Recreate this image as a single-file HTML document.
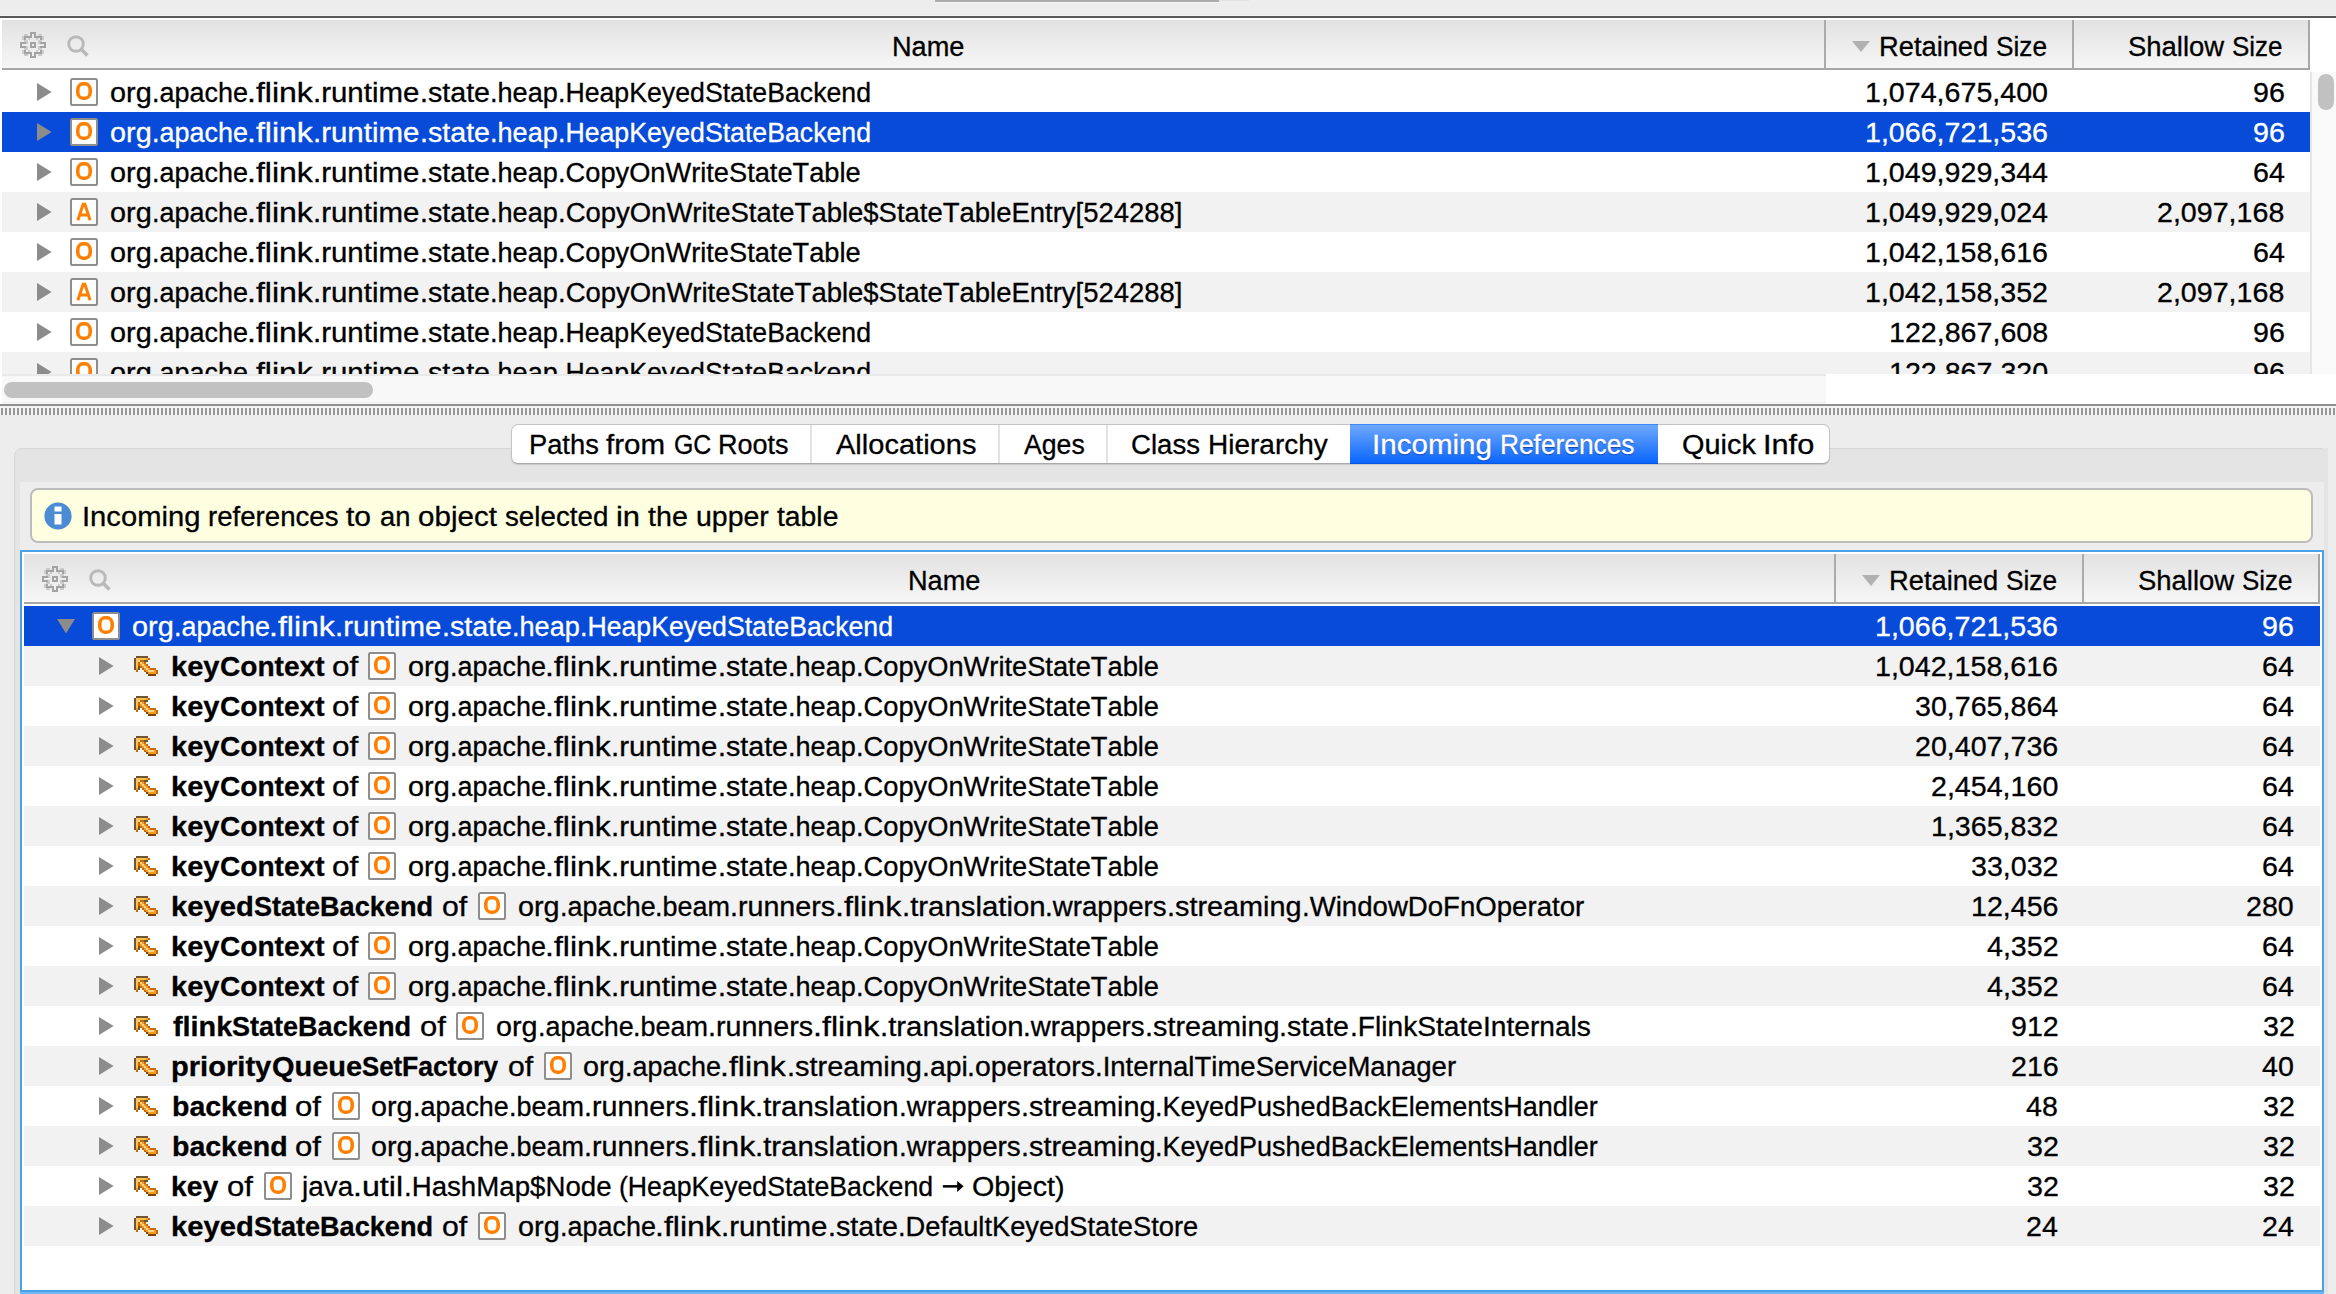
<!DOCTYPE html>
<html><head><meta charset="utf-8"><style>
html,body{margin:0;padding:0}
body{width:2336px;height:1294px;overflow:hidden;position:relative;background:#ededed;font-family:"Liberation Sans",sans-serif}
body div, body svg, body span{position:absolute;display:block}
span.t{white-space:pre;line-height:1.2;transform-origin:0 0;height:auto}
span.t{line-height:normal;font-kerning:none;font-variant-ligatures:none;-webkit-text-stroke:0.3px currentColor}
</style></head><body>
<div style="left:0px;top:0px;width:2336px;height:16px;background:#ededed"></div>
<div style="left:935px;top:0px;width:284px;height:2px;background:#ababab"></div>
<div style="left:1219px;top:0px;width:30px;height:1px;background:#e2e2e2"></div>
<div style="left:935px;top:2px;width:284px;height:1px;background:#f3f3f3"></div>
<div style="left:0px;top:15px;width:2336px;height:1px;background:#f4f4f4"></div>
<div style="left:0px;top:16px;width:2336px;height:2px;background:#595959"></div>
<div style="left:0px;top:18px;width:2336px;height:386px;background:#fff"></div>
<div style="left:2px;top:20px;width:2308px;height:48px;background:linear-gradient(#e2e2e2,#f6f6f6)"></div>
<div style="left:2px;top:68px;width:2308px;height:2px;background:#a7a7a7"></div>
<div style="left:1824px;top:20px;width:2px;height:48px;background:#ababab"></div>
<div style="left:2072px;top:20px;width:2px;height:48px;background:#ababab"></div>
<div style="left:2308px;top:20px;width:2px;height:50px;background:#a7a7a7"></div>
<svg style="left:20px;top:32px" width="26" height="26" viewBox="0 0 26 26" shape-rendering="crispEdges"><rect x="10" y="0" width="2" height="2" fill="#a3a3a3"/><rect x="12" y="0" width="2" height="2" fill="#a3a3a3"/><rect x="14" y="0" width="2" height="2" fill="#a3a3a3"/><rect x="4" y="2" width="2" height="2" fill="#cbcbcb"/><rect x="6" y="2" width="2" height="2" fill="#cbcbcb"/><rect x="10" y="2" width="2" height="2" fill="#a3a3a3"/><rect x="14" y="2" width="2" height="2" fill="#a3a3a3"/><rect x="18" y="2" width="2" height="2" fill="#cbcbcb"/><rect x="20" y="2" width="2" height="2" fill="#cbcbcb"/><rect x="2" y="4" width="2" height="2" fill="#cbcbcb"/><rect x="4" y="4" width="2" height="2" fill="#a3a3a3"/><rect x="6" y="4" width="2" height="2" fill="#a3a3a3"/><rect x="8" y="4" width="2" height="2" fill="#a3a3a3"/><rect x="10" y="4" width="2" height="2" fill="#a3a3a3"/><rect x="14" y="4" width="2" height="2" fill="#a3a3a3"/><rect x="16" y="4" width="2" height="2" fill="#a3a3a3"/><rect x="18" y="4" width="2" height="2" fill="#a3a3a3"/><rect x="20" y="4" width="2" height="2" fill="#a3a3a3"/><rect x="22" y="4" width="2" height="2" fill="#cbcbcb"/><rect x="2" y="6" width="2" height="2" fill="#cbcbcb"/><rect x="4" y="6" width="2" height="2" fill="#a3a3a3"/><rect x="8" y="6" width="2" height="2" fill="#cbcbcb"/><rect x="16" y="6" width="2" height="2" fill="#cbcbcb"/><rect x="20" y="6" width="2" height="2" fill="#a3a3a3"/><rect x="22" y="6" width="2" height="2" fill="#cbcbcb"/><rect x="4" y="8" width="2" height="2" fill="#cbcbcb"/><rect x="6" y="8" width="2" height="2" fill="#cbcbcb"/><rect x="18" y="8" width="2" height="2" fill="#cbcbcb"/><rect x="20" y="8" width="2" height="2" fill="#cbcbcb"/><rect x="0" y="10" width="2" height="2" fill="#a3a3a3"/><rect x="2" y="10" width="2" height="2" fill="#a3a3a3"/><rect x="4" y="10" width="2" height="2" fill="#a3a3a3"/><rect x="6" y="10" width="2" height="2" fill="#cbcbcb"/><rect x="10" y="10" width="2" height="2" fill="#a3a3a3"/><rect x="12" y="10" width="2" height="2" fill="#a3a3a3"/><rect x="14" y="10" width="2" height="2" fill="#a3a3a3"/><rect x="18" y="10" width="2" height="2" fill="#cbcbcb"/><rect x="20" y="10" width="2" height="2" fill="#a3a3a3"/><rect x="22" y="10" width="2" height="2" fill="#a3a3a3"/><rect x="24" y="10" width="2" height="2" fill="#a3a3a3"/><rect x="0" y="12" width="2" height="2" fill="#a3a3a3"/><rect x="10" y="12" width="2" height="2" fill="#a3a3a3"/><rect x="14" y="12" width="2" height="2" fill="#a3a3a3"/><rect x="24" y="12" width="2" height="2" fill="#a3a3a3"/><rect x="0" y="14" width="2" height="2" fill="#a3a3a3"/><rect x="2" y="14" width="2" height="2" fill="#a3a3a3"/><rect x="4" y="14" width="2" height="2" fill="#a3a3a3"/><rect x="6" y="14" width="2" height="2" fill="#cbcbcb"/><rect x="10" y="14" width="2" height="2" fill="#a3a3a3"/><rect x="12" y="14" width="2" height="2" fill="#a3a3a3"/><rect x="14" y="14" width="2" height="2" fill="#a3a3a3"/><rect x="18" y="14" width="2" height="2" fill="#cbcbcb"/><rect x="20" y="14" width="2" height="2" fill="#a3a3a3"/><rect x="22" y="14" width="2" height="2" fill="#a3a3a3"/><rect x="24" y="14" width="2" height="2" fill="#a3a3a3"/><rect x="4" y="16" width="2" height="2" fill="#cbcbcb"/><rect x="6" y="16" width="2" height="2" fill="#cbcbcb"/><rect x="18" y="16" width="2" height="2" fill="#cbcbcb"/><rect x="20" y="16" width="2" height="2" fill="#cbcbcb"/><rect x="2" y="18" width="2" height="2" fill="#cbcbcb"/><rect x="4" y="18" width="2" height="2" fill="#a3a3a3"/><rect x="8" y="18" width="2" height="2" fill="#cbcbcb"/><rect x="16" y="18" width="2" height="2" fill="#cbcbcb"/><rect x="20" y="18" width="2" height="2" fill="#a3a3a3"/><rect x="22" y="18" width="2" height="2" fill="#cbcbcb"/><rect x="2" y="20" width="2" height="2" fill="#cbcbcb"/><rect x="4" y="20" width="2" height="2" fill="#a3a3a3"/><rect x="6" y="20" width="2" height="2" fill="#a3a3a3"/><rect x="8" y="20" width="2" height="2" fill="#a3a3a3"/><rect x="10" y="20" width="2" height="2" fill="#a3a3a3"/><rect x="14" y="20" width="2" height="2" fill="#a3a3a3"/><rect x="16" y="20" width="2" height="2" fill="#a3a3a3"/><rect x="18" y="20" width="2" height="2" fill="#a3a3a3"/><rect x="20" y="20" width="2" height="2" fill="#a3a3a3"/><rect x="22" y="20" width="2" height="2" fill="#cbcbcb"/><rect x="4" y="22" width="2" height="2" fill="#cbcbcb"/><rect x="6" y="22" width="2" height="2" fill="#cbcbcb"/><rect x="10" y="22" width="2" height="2" fill="#a3a3a3"/><rect x="14" y="22" width="2" height="2" fill="#a3a3a3"/><rect x="18" y="22" width="2" height="2" fill="#cbcbcb"/><rect x="20" y="22" width="2" height="2" fill="#cbcbcb"/><rect x="10" y="24" width="2" height="2" fill="#a3a3a3"/><rect x="12" y="24" width="2" height="2" fill="#a3a3a3"/><rect x="14" y="24" width="2" height="2" fill="#a3a3a3"/></svg>
<svg style="left:64px;top:32px" width="26" height="26" viewBox="0 0 26 26"><circle cx="12" cy="12" r="7.3" fill="none" stroke="#b9b9b9" stroke-width="2.9"/><path d="M16.8 16.8l6.6 6.6" stroke="#b9b9b9" stroke-width="3.6" stroke-linecap="butt"/></svg>
<svg style="left:1852px;top:41px" width="18" height="11" viewBox="0 0 18 11"><path d="M0 0H18L9 11z" fill="#b1b1b1"/></svg>
<span class="t" style="left:891.77px;top:31.56px;font-size:27px;font-weight:normal;color:#000;transform:scaleX(1.0057);">Name</span>
<span class="t" style="left:1878.76px;top:31.56px;font-size:27px;font-weight:normal;color:#000;transform:scaleX(1.0105);">Retained </span>
<span class="t" style="left:1995.61px;top:31.56px;font-size:27px;font-weight:normal;color:#000;transform:scaleX(0.9721);">Size</span>
<span class="t" style="left:2127.75px;top:31.56px;font-size:27px;font-weight:normal;color:#000;transform:scaleX(1.0171);">Shallow </span>
<span class="t" style="left:2231.62px;top:31.56px;font-size:27px;font-weight:normal;color:#000;transform:scaleX(0.9621);">Size</span>
<div style="left:0;top:0;width:2336px;height:1294px;clip-path:inset(70px 26px 920px 0px)">
<div style="left:2px;top:72px;width:2308px;height:40px;background:#fff"></div>
<svg style="left:37px;top:83px" width="15" height="18" viewBox="0 0 15 18"><path d="M0 0L14.6 9L0 18z" fill="#8c8c8c"/></svg>
<svg style="left:70px;top:78px" width="28" height="28" viewBox="0 0 28 28"><rect x="1" y="1" width="26" height="26" rx="1.6" fill="#fff" stroke="#8e8e8e" stroke-width="2"/><rect x="7.8" y="5.8" width="12.4" height="14.4" rx="5.2" ry="6" fill="none" stroke="#ff8000" stroke-width="3.6"/></svg>
<span class="t" style="left:109.89px;top:77.56px;font-size:27px;font-weight:normal;color:#000;transform:scaleX(1.0680);">org</span>
<span class="t" style="left:151.74px;top:77.56px;font-size:27px;font-weight:normal;color:#000;transform:scaleX(0.9981);">.apache</span>
<span class="t" style="left:247.17px;top:77.56px;font-size:27px;font-weight:normal;color:#000;transform:scaleX(1.1870);">.flink</span>
<span class="t" style="left:313.31px;top:77.56px;font-size:27px;font-weight:normal;color:#000;transform:scaleX(1.0899);">.runtime</span>
<span class="t" style="left:419.69px;top:77.56px;font-size:27px;font-weight:normal;color:#000;transform:scaleX(1.0600);">.state</span>
<span class="t" style="left:489.83px;top:77.56px;font-size:27px;font-weight:normal;color:#000;transform:scaleX(1.0035);">.heap</span>
<span class="t" style="left:557.66px;top:77.56px;font-size:27px;font-weight:normal;color:#000;transform:scaleX(0.9884);">.HeapKeyedStateBackend</span>
<span class="t" style="left:1865.09px;top:77.56px;font-size:27px;font-weight:normal;color:#000;transform:scaleX(1.0600);">1,074,675,400</span>
<span class="t" style="left:2252.92px;top:77.56px;font-size:27px;font-weight:normal;color:#000;transform:scaleX(1.0600);">96</span>
<div style="left:2px;top:112px;width:2308px;height:40px;background:#074bd8"></div>
<svg style="left:37px;top:123px" width="15" height="18" viewBox="0 0 15 18"><path d="M0 0L14.6 9L0 18z" fill="#8c8c8c"/></svg>
<svg style="left:70px;top:118px" width="28" height="28" viewBox="0 0 28 28"><rect x="1" y="1" width="26" height="26" rx="1.6" fill="#fff" stroke="#8e8e8e" stroke-width="2"/><rect x="7.8" y="5.8" width="12.4" height="14.4" rx="5.2" ry="6" fill="none" stroke="#ff8000" stroke-width="3.6"/></svg>
<span class="t" style="left:109.89px;top:117.56px;font-size:27px;font-weight:normal;color:#fff;transform:scaleX(1.0680);">org</span>
<span class="t" style="left:151.74px;top:117.56px;font-size:27px;font-weight:normal;color:#fff;transform:scaleX(0.9981);">.apache</span>
<span class="t" style="left:247.17px;top:117.56px;font-size:27px;font-weight:normal;color:#fff;transform:scaleX(1.1870);">.flink</span>
<span class="t" style="left:313.31px;top:117.56px;font-size:27px;font-weight:normal;color:#fff;transform:scaleX(1.0899);">.runtime</span>
<span class="t" style="left:419.69px;top:117.56px;font-size:27px;font-weight:normal;color:#fff;transform:scaleX(1.0600);">.state</span>
<span class="t" style="left:489.83px;top:117.56px;font-size:27px;font-weight:normal;color:#fff;transform:scaleX(1.0035);">.heap</span>
<span class="t" style="left:557.66px;top:117.56px;font-size:27px;font-weight:normal;color:#fff;transform:scaleX(0.9884);">.HeapKeyedStateBackend</span>
<span class="t" style="left:1865.23px;top:117.56px;font-size:27px;font-weight:normal;color:#fff;transform:scaleX(1.0600);">1,066,721,536</span>
<span class="t" style="left:2252.92px;top:117.56px;font-size:27px;font-weight:normal;color:#fff;transform:scaleX(1.0600);">96</span>
<div style="left:2px;top:152px;width:2308px;height:40px;background:#fff"></div>
<svg style="left:37px;top:163px" width="15" height="18" viewBox="0 0 15 18"><path d="M0 0L14.6 9L0 18z" fill="#8c8c8c"/></svg>
<svg style="left:70px;top:158px" width="28" height="28" viewBox="0 0 28 28"><rect x="1" y="1" width="26" height="26" rx="1.6" fill="#fff" stroke="#8e8e8e" stroke-width="2"/><rect x="7.8" y="5.8" width="12.4" height="14.4" rx="5.2" ry="6" fill="none" stroke="#ff8000" stroke-width="3.6"/></svg>
<span class="t" style="left:109.89px;top:157.56px;font-size:27px;font-weight:normal;color:#000;transform:scaleX(1.0680);">org</span>
<span class="t" style="left:151.74px;top:157.56px;font-size:27px;font-weight:normal;color:#000;transform:scaleX(0.9981);">.apache</span>
<span class="t" style="left:247.17px;top:157.56px;font-size:27px;font-weight:normal;color:#000;transform:scaleX(1.1870);">.flink</span>
<span class="t" style="left:313.31px;top:157.56px;font-size:27px;font-weight:normal;color:#000;transform:scaleX(1.0899);">.runtime</span>
<span class="t" style="left:419.69px;top:157.56px;font-size:27px;font-weight:normal;color:#000;transform:scaleX(1.0600);">.state</span>
<span class="t" style="left:489.83px;top:157.56px;font-size:27px;font-weight:normal;color:#000;transform:scaleX(1.0035);">.heap</span>
<span class="t" style="left:557.61px;top:157.56px;font-size:27px;font-weight:normal;color:#000;transform:scaleX(1.0086);">.CopyOnWriteStateTable</span>
<span class="t" style="left:1864.81px;top:157.56px;font-size:27px;font-weight:normal;color:#000;transform:scaleX(1.0600);">1,049,929,344</span>
<span class="t" style="left:2252.50px;top:157.56px;font-size:27px;font-weight:normal;color:#000;transform:scaleX(1.0600);">64</span>
<div style="left:2px;top:192px;width:2308px;height:40px;background:#f2f2f2"></div>
<svg style="left:37px;top:203px" width="15" height="18" viewBox="0 0 15 18"><path d="M0 0L14.6 9L0 18z" fill="#8c8c8c"/></svg>
<svg style="left:70px;top:198px" width="28" height="28" viewBox="0 0 28 28"><rect x="1" y="1" width="26" height="26" rx="1.6" fill="#fff" stroke="#8e8e8e" stroke-width="2"/><path d="M7.9 22.2 L13.1 6.3 h1.8 L20.1 22.2 M10.4 17 h7.2" fill="none" stroke="#ff7f00" stroke-width="3"/></svg>
<span class="t" style="left:109.89px;top:197.56px;font-size:27px;font-weight:normal;color:#000;transform:scaleX(1.0680);">org</span>
<span class="t" style="left:151.74px;top:197.56px;font-size:27px;font-weight:normal;color:#000;transform:scaleX(0.9981);">.apache</span>
<span class="t" style="left:247.17px;top:197.56px;font-size:27px;font-weight:normal;color:#000;transform:scaleX(1.1870);">.flink</span>
<span class="t" style="left:313.31px;top:197.56px;font-size:27px;font-weight:normal;color:#000;transform:scaleX(1.0899);">.runtime</span>
<span class="t" style="left:419.69px;top:197.56px;font-size:27px;font-weight:normal;color:#000;transform:scaleX(1.0600);">.state</span>
<span class="t" style="left:489.83px;top:197.56px;font-size:27px;font-weight:normal;color:#000;transform:scaleX(1.0035);">.heap</span>
<span class="t" style="left:557.59px;top:197.56px;font-size:27px;font-weight:normal;color:#000;transform:scaleX(1.0173);">.CopyOnWriteStateTable$StateTableEntry[524288]</span>
<span class="t" style="left:1864.81px;top:197.56px;font-size:27px;font-weight:normal;color:#000;transform:scaleX(1.0600);">1,049,929,024</span>
<span class="t" style="left:2157.42px;top:197.56px;font-size:27px;font-weight:normal;color:#000;transform:scaleX(1.0600);">2,097,168</span>
<div style="left:2px;top:232px;width:2308px;height:40px;background:#fff"></div>
<svg style="left:37px;top:243px" width="15" height="18" viewBox="0 0 15 18"><path d="M0 0L14.6 9L0 18z" fill="#8c8c8c"/></svg>
<svg style="left:70px;top:238px" width="28" height="28" viewBox="0 0 28 28"><rect x="1" y="1" width="26" height="26" rx="1.6" fill="#fff" stroke="#8e8e8e" stroke-width="2"/><rect x="7.8" y="5.8" width="12.4" height="14.4" rx="5.2" ry="6" fill="none" stroke="#ff8000" stroke-width="3.6"/></svg>
<span class="t" style="left:109.89px;top:237.56px;font-size:27px;font-weight:normal;color:#000;transform:scaleX(1.0680);">org</span>
<span class="t" style="left:151.74px;top:237.56px;font-size:27px;font-weight:normal;color:#000;transform:scaleX(0.9981);">.apache</span>
<span class="t" style="left:247.17px;top:237.56px;font-size:27px;font-weight:normal;color:#000;transform:scaleX(1.1870);">.flink</span>
<span class="t" style="left:313.31px;top:237.56px;font-size:27px;font-weight:normal;color:#000;transform:scaleX(1.0899);">.runtime</span>
<span class="t" style="left:419.69px;top:237.56px;font-size:27px;font-weight:normal;color:#000;transform:scaleX(1.0600);">.state</span>
<span class="t" style="left:489.83px;top:237.56px;font-size:27px;font-weight:normal;color:#000;transform:scaleX(1.0035);">.heap</span>
<span class="t" style="left:557.61px;top:237.56px;font-size:27px;font-weight:normal;color:#000;transform:scaleX(1.0086);">.CopyOnWriteStateTable</span>
<span class="t" style="left:1865.23px;top:237.56px;font-size:27px;font-weight:normal;color:#000;transform:scaleX(1.0600);">1,042,158,616</span>
<span class="t" style="left:2252.50px;top:237.56px;font-size:27px;font-weight:normal;color:#000;transform:scaleX(1.0600);">64</span>
<div style="left:2px;top:272px;width:2308px;height:40px;background:#f2f2f2"></div>
<svg style="left:37px;top:283px" width="15" height="18" viewBox="0 0 15 18"><path d="M0 0L14.6 9L0 18z" fill="#8c8c8c"/></svg>
<svg style="left:70px;top:278px" width="28" height="28" viewBox="0 0 28 28"><rect x="1" y="1" width="26" height="26" rx="1.6" fill="#fff" stroke="#8e8e8e" stroke-width="2"/><path d="M7.9 22.2 L13.1 6.3 h1.8 L20.1 22.2 M10.4 17 h7.2" fill="none" stroke="#ff7f00" stroke-width="3"/></svg>
<span class="t" style="left:109.89px;top:277.56px;font-size:27px;font-weight:normal;color:#000;transform:scaleX(1.0680);">org</span>
<span class="t" style="left:151.74px;top:277.56px;font-size:27px;font-weight:normal;color:#000;transform:scaleX(0.9981);">.apache</span>
<span class="t" style="left:247.17px;top:277.56px;font-size:27px;font-weight:normal;color:#000;transform:scaleX(1.1870);">.flink</span>
<span class="t" style="left:313.31px;top:277.56px;font-size:27px;font-weight:normal;color:#000;transform:scaleX(1.0899);">.runtime</span>
<span class="t" style="left:419.69px;top:277.56px;font-size:27px;font-weight:normal;color:#000;transform:scaleX(1.0600);">.state</span>
<span class="t" style="left:489.83px;top:277.56px;font-size:27px;font-weight:normal;color:#000;transform:scaleX(1.0035);">.heap</span>
<span class="t" style="left:557.59px;top:277.56px;font-size:27px;font-weight:normal;color:#000;transform:scaleX(1.0173);">.CopyOnWriteStateTable$StateTableEntry[524288]</span>
<span class="t" style="left:1865.41px;top:277.56px;font-size:27px;font-weight:normal;color:#000;transform:scaleX(1.0600);">1,042,158,352</span>
<span class="t" style="left:2157.42px;top:277.56px;font-size:27px;font-weight:normal;color:#000;transform:scaleX(1.0600);">2,097,168</span>
<div style="left:2px;top:312px;width:2308px;height:40px;background:#fff"></div>
<svg style="left:37px;top:323px" width="15" height="18" viewBox="0 0 15 18"><path d="M0 0L14.6 9L0 18z" fill="#8c8c8c"/></svg>
<svg style="left:70px;top:318px" width="28" height="28" viewBox="0 0 28 28"><rect x="1" y="1" width="26" height="26" rx="1.6" fill="#fff" stroke="#8e8e8e" stroke-width="2"/><rect x="7.8" y="5.8" width="12.4" height="14.4" rx="5.2" ry="6" fill="none" stroke="#ff8000" stroke-width="3.6"/></svg>
<span class="t" style="left:109.89px;top:317.56px;font-size:27px;font-weight:normal;color:#000;transform:scaleX(1.0680);">org</span>
<span class="t" style="left:151.74px;top:317.56px;font-size:27px;font-weight:normal;color:#000;transform:scaleX(0.9981);">.apache</span>
<span class="t" style="left:247.17px;top:317.56px;font-size:27px;font-weight:normal;color:#000;transform:scaleX(1.1870);">.flink</span>
<span class="t" style="left:313.31px;top:317.56px;font-size:27px;font-weight:normal;color:#000;transform:scaleX(1.0899);">.runtime</span>
<span class="t" style="left:419.69px;top:317.56px;font-size:27px;font-weight:normal;color:#000;transform:scaleX(1.0600);">.state</span>
<span class="t" style="left:489.83px;top:317.56px;font-size:27px;font-weight:normal;color:#000;transform:scaleX(1.0035);">.heap</span>
<span class="t" style="left:557.66px;top:317.56px;font-size:27px;font-weight:normal;color:#000;transform:scaleX(0.9884);">.HeapKeyedStateBackend</span>
<span class="t" style="left:1889.09px;top:317.56px;font-size:27px;font-weight:normal;color:#000;transform:scaleX(1.0600);">122,867,608</span>
<span class="t" style="left:2252.92px;top:317.56px;font-size:27px;font-weight:normal;color:#000;transform:scaleX(1.0600);">96</span>
<div style="left:2px;top:352px;width:2308px;height:40px;background:#f2f2f2"></div>
<svg style="left:37px;top:363px" width="15" height="18" viewBox="0 0 15 18"><path d="M0 0L14.6 9L0 18z" fill="#8c8c8c"/></svg>
<svg style="left:70px;top:358px" width="28" height="28" viewBox="0 0 28 28"><rect x="1" y="1" width="26" height="26" rx="1.6" fill="#fff" stroke="#8e8e8e" stroke-width="2"/><rect x="7.8" y="5.8" width="12.4" height="14.4" rx="5.2" ry="6" fill="none" stroke="#ff8000" stroke-width="3.6"/></svg>
<span class="t" style="left:109.89px;top:357.56px;font-size:27px;font-weight:normal;color:#000;transform:scaleX(1.0680);">org</span>
<span class="t" style="left:151.74px;top:357.56px;font-size:27px;font-weight:normal;color:#000;transform:scaleX(0.9981);">.apache</span>
<span class="t" style="left:247.17px;top:357.56px;font-size:27px;font-weight:normal;color:#000;transform:scaleX(1.1870);">.flink</span>
<span class="t" style="left:313.31px;top:357.56px;font-size:27px;font-weight:normal;color:#000;transform:scaleX(1.0899);">.runtime</span>
<span class="t" style="left:419.69px;top:357.56px;font-size:27px;font-weight:normal;color:#000;transform:scaleX(1.0600);">.state</span>
<span class="t" style="left:489.83px;top:357.56px;font-size:27px;font-weight:normal;color:#000;transform:scaleX(1.0035);">.heap</span>
<span class="t" style="left:557.66px;top:357.56px;font-size:27px;font-weight:normal;color:#000;transform:scaleX(0.9884);">.HeapKeyedStateBackend</span>
<span class="t" style="left:1888.96px;top:357.56px;font-size:27px;font-weight:normal;color:#000;transform:scaleX(1.0600);">122,867,320</span>
<span class="t" style="left:2252.92px;top:357.56px;font-size:27px;font-weight:normal;color:#000;transform:scaleX(1.0600);">96</span>
</div>
<div style="left:2310px;top:72px;width:26px;height:302px;background:#f9f9f9"></div>
<div style="left:2310px;top:72px;width:2px;height:302px;background:#e6e6e6"></div>
<div style="left:2318px;top:74px;width:16px;height:36px;background:#c1c1c1;border-radius:8px"></div>
<div style="left:2px;top:374px;width:1824px;height:2px;background:#e9e9e9"></div>
<div style="left:2px;top:376px;width:1824px;height:28px;background:#f8f8f8"></div>
<div style="left:4px;top:382px;width:369px;height:16px;background:#c1c1c1;border-radius:8px"></div>
<div style="left:2px;top:402px;width:1824px;height:1px;background:#ececec"></div>
<div style="left:0px;top:404px;width:2336px;height:2px;background:#8f8f8f"></div>
<div style="left:0px;top:406px;width:2336px;height:2px;background:#f2f2f2"></div>
<div style="left:0px;top:408px;width:2336px;height:7px;background:repeating-linear-gradient(90deg,#f4f4f4 0 1px,#979797 1px 3px,#f4f4f4 3px 4px)"></div>
<div style="left:0px;top:415px;width:2336px;height:879px;background:#ededed"></div>
<div style="left:14px;top:448px;width:2314px;height:860px;background:#e4e4e4;border:1px solid #d6d6d6;border-radius:8px;box-sizing:border-box"></div>
<div style="left:20px;top:482px;width:2304px;height:812px;background:#ededed"></div>
<div style="left:511px;top:424px;width:1319px;height:40px;background:#fff;border:1px solid #c3c3c3;border-bottom-color:#a9a9a9;border-radius:7px;box-sizing:border-box;box-shadow:0 1px 1px rgba(0,0,0,0.12)"></div>
<div style="left:1350px;top:424px;width:308px;height:40px;background:linear-gradient(#6ea8fb,#0a66fe);border-top:1px solid #3d88fa;border-bottom:1px solid #0658e0;box-sizing:border-box"></div>
<div style="left:810px;top:425px;width:2px;height:38px;background:#e3e3e3"></div>
<div style="left:998px;top:425px;width:2px;height:38px;background:#e3e3e3"></div>
<div style="left:1106px;top:425px;width:2px;height:38px;background:#e3e3e3"></div>
<span class="t" style="left:529.06px;top:429.56px;font-size:27px;font-weight:normal;color:#000;transform:scaleX(1.0106);">Paths </span>
<span class="t" style="left:606.38px;top:429.56px;font-size:27px;font-weight:normal;color:#000;transform:scaleX(1.0932);">from </span>
<span class="t" style="left:673.85px;top:429.56px;font-size:27px;font-weight:normal;color:#000;transform:scaleX(0.9210);">GC </span>
<span class="t" style="left:717.88px;top:429.56px;font-size:27px;font-weight:normal;color:#000;transform:scaleX(1.0009);">Roots</span>
<span class="t" style="left:836.34px;top:429.56px;font-size:27px;font-weight:normal;color:#000;transform:scaleX(1.0753);">Allocations</span>
<span class="t" style="left:1023.95px;top:429.56px;font-size:27px;font-weight:normal;color:#000;transform:scaleX(0.9866);">Ages</span>
<span class="t" style="left:1131.30px;top:429.56px;font-size:27px;font-weight:normal;color:#000;transform:scaleX(1.0216);">Class </span>
<span class="t" style="left:1207.90px;top:429.56px;font-size:27px;font-weight:normal;color:#000;transform:scaleX(1.0366);">Hierarchy</span>
<span class="t" style="left:1371.57px;top:429.56px;font-size:27px;font-weight:normal;color:#fff;transform:scaleX(1.0952);text-shadow:0 1px 1px rgba(0,20,90,0.55);">Incoming </span>
<span class="t" style="left:1500.04px;top:429.56px;font-size:27px;font-weight:normal;color:#fff;transform:scaleX(0.9742);text-shadow:0 1px 1px rgba(0,20,90,0.55);">References</span>
<span class="t" style="left:1681.53px;top:429.56px;font-size:27px;font-weight:normal;color:#000;transform:scaleX(1.0704);">Quick </span>
<span class="t" style="left:1763.27px;top:429.56px;font-size:27px;font-weight:normal;color:#000;transform:scaleX(1.1374);">Info</span>
<div style="left:30px;top:488px;width:2283px;height:55px;background:#fefee1;border:2px solid #bcbcbc;border-radius:8px;box-sizing:border-box"></div>
<svg style="left:44px;top:502px" width="28" height="28" viewBox="0 0 28 28"><circle cx="14" cy="14" r="13.6" fill="#4a8bd3"/><rect x="10.5" y="4.5" width="7" height="5" fill="#fff"/><rect x="10.5" y="12" width="7" height="10.5" fill="#fff"/></svg>
<span class="t" style="left:81.61px;top:501.56px;font-size:27px;font-weight:normal;color:#000;transform:scaleX(1.0803);">Incoming </span>
<span class="t" style="left:208.17px;top:501.56px;font-size:27px;font-weight:normal;color:#000;transform:scaleX(1.0233);">references </span>
<span class="t" style="left:346.35px;top:501.56px;font-size:27px;font-weight:normal;color:#000;transform:scaleX(1.1119);">to </span>
<span class="t" style="left:379.84px;top:501.56px;font-size:27px;font-weight:normal;color:#000;transform:scaleX(1.0128);">an </span>
<span class="t" style="left:417.76px;top:501.56px;font-size:27px;font-weight:normal;color:#000;transform:scaleX(1.0951);">object </span>
<span class="t" style="left:504.93px;top:501.56px;font-size:27px;font-weight:normal;color:#000;transform:scaleX(1.0273);">selected </span>
<span class="t" style="left:615.74px;top:501.56px;font-size:27px;font-weight:normal;color:#000;transform:scaleX(1.1431);">in </span>
<span class="t" style="left:648.37px;top:501.56px;font-size:27px;font-weight:normal;color:#000;transform:scaleX(1.0608);">the </span>
<span class="t" style="left:696.15px;top:501.56px;font-size:27px;font-weight:normal;color:#000;transform:scaleX(1.0543);">upper </span>
<span class="t" style="left:776.87px;top:501.56px;font-size:27px;font-weight:normal;color:#000;transform:scaleX(1.0485);">table</span>
<div style="left:20px;top:550px;width:2304px;height:742px;border:2px solid #4ca0e4;box-sizing:border-box;background:#fff"></div>
<div style="left:20px;top:1292px;width:2304px;height:2px;background:#6cbafa"></div>
<div style="left:24px;top:554px;width:2296px;height:48px;background:linear-gradient(#e2e2e2,#f6f6f6)"></div>
<div style="left:24px;top:602px;width:2296px;height:2px;background:#a7a7a7"></div>
<div style="left:1834px;top:554px;width:2px;height:48px;background:#ababab"></div>
<div style="left:2082px;top:554px;width:2px;height:48px;background:#ababab"></div>
<div style="left:2318px;top:554px;width:2px;height:50px;background:#a7a7a7"></div>
<svg style="left:42px;top:566px" width="26" height="26" viewBox="0 0 26 26" shape-rendering="crispEdges"><rect x="10" y="0" width="2" height="2" fill="#a3a3a3"/><rect x="12" y="0" width="2" height="2" fill="#a3a3a3"/><rect x="14" y="0" width="2" height="2" fill="#a3a3a3"/><rect x="4" y="2" width="2" height="2" fill="#cbcbcb"/><rect x="6" y="2" width="2" height="2" fill="#cbcbcb"/><rect x="10" y="2" width="2" height="2" fill="#a3a3a3"/><rect x="14" y="2" width="2" height="2" fill="#a3a3a3"/><rect x="18" y="2" width="2" height="2" fill="#cbcbcb"/><rect x="20" y="2" width="2" height="2" fill="#cbcbcb"/><rect x="2" y="4" width="2" height="2" fill="#cbcbcb"/><rect x="4" y="4" width="2" height="2" fill="#a3a3a3"/><rect x="6" y="4" width="2" height="2" fill="#a3a3a3"/><rect x="8" y="4" width="2" height="2" fill="#a3a3a3"/><rect x="10" y="4" width="2" height="2" fill="#a3a3a3"/><rect x="14" y="4" width="2" height="2" fill="#a3a3a3"/><rect x="16" y="4" width="2" height="2" fill="#a3a3a3"/><rect x="18" y="4" width="2" height="2" fill="#a3a3a3"/><rect x="20" y="4" width="2" height="2" fill="#a3a3a3"/><rect x="22" y="4" width="2" height="2" fill="#cbcbcb"/><rect x="2" y="6" width="2" height="2" fill="#cbcbcb"/><rect x="4" y="6" width="2" height="2" fill="#a3a3a3"/><rect x="8" y="6" width="2" height="2" fill="#cbcbcb"/><rect x="16" y="6" width="2" height="2" fill="#cbcbcb"/><rect x="20" y="6" width="2" height="2" fill="#a3a3a3"/><rect x="22" y="6" width="2" height="2" fill="#cbcbcb"/><rect x="4" y="8" width="2" height="2" fill="#cbcbcb"/><rect x="6" y="8" width="2" height="2" fill="#cbcbcb"/><rect x="18" y="8" width="2" height="2" fill="#cbcbcb"/><rect x="20" y="8" width="2" height="2" fill="#cbcbcb"/><rect x="0" y="10" width="2" height="2" fill="#a3a3a3"/><rect x="2" y="10" width="2" height="2" fill="#a3a3a3"/><rect x="4" y="10" width="2" height="2" fill="#a3a3a3"/><rect x="6" y="10" width="2" height="2" fill="#cbcbcb"/><rect x="10" y="10" width="2" height="2" fill="#a3a3a3"/><rect x="12" y="10" width="2" height="2" fill="#a3a3a3"/><rect x="14" y="10" width="2" height="2" fill="#a3a3a3"/><rect x="18" y="10" width="2" height="2" fill="#cbcbcb"/><rect x="20" y="10" width="2" height="2" fill="#a3a3a3"/><rect x="22" y="10" width="2" height="2" fill="#a3a3a3"/><rect x="24" y="10" width="2" height="2" fill="#a3a3a3"/><rect x="0" y="12" width="2" height="2" fill="#a3a3a3"/><rect x="10" y="12" width="2" height="2" fill="#a3a3a3"/><rect x="14" y="12" width="2" height="2" fill="#a3a3a3"/><rect x="24" y="12" width="2" height="2" fill="#a3a3a3"/><rect x="0" y="14" width="2" height="2" fill="#a3a3a3"/><rect x="2" y="14" width="2" height="2" fill="#a3a3a3"/><rect x="4" y="14" width="2" height="2" fill="#a3a3a3"/><rect x="6" y="14" width="2" height="2" fill="#cbcbcb"/><rect x="10" y="14" width="2" height="2" fill="#a3a3a3"/><rect x="12" y="14" width="2" height="2" fill="#a3a3a3"/><rect x="14" y="14" width="2" height="2" fill="#a3a3a3"/><rect x="18" y="14" width="2" height="2" fill="#cbcbcb"/><rect x="20" y="14" width="2" height="2" fill="#a3a3a3"/><rect x="22" y="14" width="2" height="2" fill="#a3a3a3"/><rect x="24" y="14" width="2" height="2" fill="#a3a3a3"/><rect x="4" y="16" width="2" height="2" fill="#cbcbcb"/><rect x="6" y="16" width="2" height="2" fill="#cbcbcb"/><rect x="18" y="16" width="2" height="2" fill="#cbcbcb"/><rect x="20" y="16" width="2" height="2" fill="#cbcbcb"/><rect x="2" y="18" width="2" height="2" fill="#cbcbcb"/><rect x="4" y="18" width="2" height="2" fill="#a3a3a3"/><rect x="8" y="18" width="2" height="2" fill="#cbcbcb"/><rect x="16" y="18" width="2" height="2" fill="#cbcbcb"/><rect x="20" y="18" width="2" height="2" fill="#a3a3a3"/><rect x="22" y="18" width="2" height="2" fill="#cbcbcb"/><rect x="2" y="20" width="2" height="2" fill="#cbcbcb"/><rect x="4" y="20" width="2" height="2" fill="#a3a3a3"/><rect x="6" y="20" width="2" height="2" fill="#a3a3a3"/><rect x="8" y="20" width="2" height="2" fill="#a3a3a3"/><rect x="10" y="20" width="2" height="2" fill="#a3a3a3"/><rect x="14" y="20" width="2" height="2" fill="#a3a3a3"/><rect x="16" y="20" width="2" height="2" fill="#a3a3a3"/><rect x="18" y="20" width="2" height="2" fill="#a3a3a3"/><rect x="20" y="20" width="2" height="2" fill="#a3a3a3"/><rect x="22" y="20" width="2" height="2" fill="#cbcbcb"/><rect x="4" y="22" width="2" height="2" fill="#cbcbcb"/><rect x="6" y="22" width="2" height="2" fill="#cbcbcb"/><rect x="10" y="22" width="2" height="2" fill="#a3a3a3"/><rect x="14" y="22" width="2" height="2" fill="#a3a3a3"/><rect x="18" y="22" width="2" height="2" fill="#cbcbcb"/><rect x="20" y="22" width="2" height="2" fill="#cbcbcb"/><rect x="10" y="24" width="2" height="2" fill="#a3a3a3"/><rect x="12" y="24" width="2" height="2" fill="#a3a3a3"/><rect x="14" y="24" width="2" height="2" fill="#a3a3a3"/></svg>
<svg style="left:86px;top:566px" width="26" height="26" viewBox="0 0 26 26"><circle cx="12" cy="12" r="7.3" fill="none" stroke="#b9b9b9" stroke-width="2.9"/><path d="M16.8 16.8l6.6 6.6" stroke="#b9b9b9" stroke-width="3.6" stroke-linecap="butt"/></svg>
<svg style="left:1862px;top:575px" width="18" height="11" viewBox="0 0 18 11"><path d="M0 0H18L9 11z" fill="#b1b1b1"/></svg>
<span class="t" style="left:907.77px;top:565.57px;font-size:27px;font-weight:normal;color:#000;transform:scaleX(1.0057);">Name</span>
<span class="t" style="left:1888.76px;top:565.57px;font-size:27px;font-weight:normal;color:#000;transform:scaleX(1.0105);">Retained </span>
<span class="t" style="left:2005.61px;top:565.57px;font-size:27px;font-weight:normal;color:#000;transform:scaleX(0.9721);">Size</span>
<span class="t" style="left:2137.75px;top:565.57px;font-size:27px;font-weight:normal;color:#000;transform:scaleX(1.0171);">Shallow </span>
<span class="t" style="left:2241.62px;top:565.57px;font-size:27px;font-weight:normal;color:#000;transform:scaleX(0.9621);">Size</span>
<div style="left:24px;top:606px;width:2296px;height:40px;background:#074bd8"></div>
<svg style="left:57px;top:619px" width="18" height="15" viewBox="0 0 18 15"><path d="M0 0H18L9 14.5z" fill="#8c8c8c"/></svg>
<svg style="left:92px;top:612px" width="28" height="28" viewBox="0 0 28 28"><rect x="1" y="1" width="26" height="26" rx="1.6" fill="#fff" stroke="#8e8e8e" stroke-width="2"/><rect x="7.8" y="5.8" width="12.4" height="14.4" rx="5.2" ry="6" fill="none" stroke="#ff8000" stroke-width="3.6"/></svg>
<span class="t" style="left:131.79px;top:611.57px;font-size:27px;font-weight:normal;color:#fff;transform:scaleX(1.0680);">org</span>
<span class="t" style="left:173.64px;top:611.57px;font-size:27px;font-weight:normal;color:#fff;transform:scaleX(0.9981);">.apache</span>
<span class="t" style="left:269.07px;top:611.57px;font-size:27px;font-weight:normal;color:#fff;transform:scaleX(1.1870);">.flink</span>
<span class="t" style="left:335.21px;top:611.57px;font-size:27px;font-weight:normal;color:#fff;transform:scaleX(1.0899);">.runtime</span>
<span class="t" style="left:441.59px;top:611.57px;font-size:27px;font-weight:normal;color:#fff;transform:scaleX(1.0600);">.state</span>
<span class="t" style="left:511.73px;top:611.57px;font-size:27px;font-weight:normal;color:#fff;transform:scaleX(1.0035);">.heap</span>
<span class="t" style="left:579.56px;top:611.57px;font-size:27px;font-weight:normal;color:#fff;transform:scaleX(0.9884);">.HeapKeyedStateBackend</span>
<span class="t" style="left:1875.23px;top:611.57px;font-size:27px;font-weight:normal;color:#fff;transform:scaleX(1.0600);">1,066,721,536</span>
<span class="t" style="left:2262.42px;top:611.57px;font-size:27px;font-weight:normal;color:#fff;transform:scaleX(1.0600);">96</span>
<div style="left:24px;top:646px;width:2296px;height:40px;background:#f2f2f2"></div>
<svg style="left:99px;top:657px" width="15" height="18" viewBox="0 0 15 18"><path d="M0 0L14.6 9L0 18z" fill="#8c8c8c"/></svg>
<svg style="left:134px;top:656px" width="24" height="20" viewBox="0 0 24 20" shape-rendering="crispEdges"><rect x="2" y="0" width="2" height="2" fill="#6e5634"/><rect x="4" y="0" width="2" height="2" fill="#6e5634"/><rect x="6" y="0" width="2" height="2" fill="#6e5634"/><rect x="8" y="0" width="2" height="2" fill="#6e5634"/><rect x="10" y="0" width="2" height="2" fill="#6e5634"/><rect x="12" y="0" width="2" height="2" fill="#6e5634"/><rect x="0" y="2" width="2" height="2" fill="#6e5634"/><rect x="2" y="2" width="2" height="2" fill="#ffc04f"/><rect x="4" y="2" width="2" height="2" fill="#ffc04f"/><rect x="6" y="2" width="2" height="2" fill="#ffc04f"/><rect x="8" y="2" width="2" height="2" fill="#ffc04f"/><rect x="10" y="2" width="2" height="2" fill="#ffc04f"/><rect x="12" y="2" width="2" height="2" fill="#f39a26"/><rect x="14" y="2" width="2" height="2" fill="#c4690c"/><rect x="0" y="4" width="2" height="2" fill="#6e5634"/><rect x="2" y="4" width="2" height="2" fill="#ffc04f"/><rect x="4" y="4" width="2" height="2" fill="#fbd98a"/><rect x="6" y="4" width="2" height="2" fill="#c4690c"/><rect x="8" y="4" width="2" height="2" fill="#c4690c"/><rect x="10" y="4" width="2" height="2" fill="#6e5634"/><rect x="12" y="4" width="2" height="2" fill="#6e5634"/><rect x="0" y="6" width="2" height="2" fill="#6e5634"/><rect x="2" y="6" width="2" height="2" fill="#ffc04f"/><rect x="4" y="6" width="2" height="2" fill="#c4690c"/><rect x="6" y="6" width="2" height="2" fill="#fbd98a"/><rect x="8" y="6" width="2" height="2" fill="#f39a26"/><rect x="10" y="6" width="2" height="2" fill="#c4690c"/><rect x="0" y="8" width="2" height="2" fill="#6e5634"/><rect x="2" y="8" width="2" height="2" fill="#ffc04f"/><rect x="4" y="8" width="2" height="2" fill="#c4690c"/><rect x="6" y="8" width="2" height="2" fill="#f39a26"/><rect x="8" y="8" width="2" height="2" fill="#fbd98a"/><rect x="10" y="8" width="2" height="2" fill="#f39a26"/><rect x="12" y="8" width="2" height="2" fill="#c4690c"/><rect x="0" y="10" width="2" height="2" fill="#6e5634"/><rect x="2" y="10" width="2" height="2" fill="#ffc04f"/><rect x="4" y="10" width="2" height="2" fill="#6e5634"/><rect x="6" y="10" width="2" height="2" fill="#c4690c"/><rect x="8" y="10" width="2" height="2" fill="#f39a26"/><rect x="10" y="10" width="2" height="2" fill="#fbd98a"/><rect x="12" y="10" width="2" height="2" fill="#f39a26"/><rect x="14" y="10" width="2" height="2" fill="#c4690c"/><rect x="0" y="12" width="2" height="2" fill="#6e5634"/><rect x="2" y="12" width="2" height="2" fill="#f39a26"/><rect x="4" y="12" width="2" height="2" fill="#6e5634"/><rect x="8" y="12" width="2" height="2" fill="#c4690c"/><rect x="10" y="12" width="2" height="2" fill="#f39a26"/><rect x="12" y="12" width="2" height="2" fill="#fbd98a"/><rect x="14" y="12" width="2" height="2" fill="#f39a26"/><rect x="16" y="12" width="2" height="2" fill="#c4690c"/><rect x="18" y="12" width="2" height="2" fill="#c4690c"/><rect x="20" y="12" width="2" height="2" fill="#c4690c"/><rect x="2" y="14" width="2" height="2" fill="#c4690c"/><rect x="10" y="14" width="2" height="2" fill="#c4690c"/><rect x="12" y="14" width="2" height="2" fill="#f39a26"/><rect x="14" y="14" width="2" height="2" fill="#fbd98a"/><rect x="16" y="14" width="2" height="2" fill="#fbd98a"/><rect x="18" y="14" width="2" height="2" fill="#fbd98a"/><rect x="20" y="14" width="2" height="2" fill="#f39a26"/><rect x="22" y="14" width="2" height="2" fill="#c4690c"/><rect x="12" y="16" width="2" height="2" fill="#7a4406"/><rect x="14" y="16" width="2" height="2" fill="#f39a26"/><rect x="16" y="16" width="2" height="2" fill="#f39a26"/><rect x="18" y="16" width="2" height="2" fill="#f39a26"/><rect x="20" y="16" width="2" height="2" fill="#f39a26"/><rect x="22" y="16" width="2" height="2" fill="#c4690c"/><rect x="14" y="18" width="2" height="2" fill="#7a4406"/><rect x="16" y="18" width="2" height="2" fill="#7a4406"/><rect x="18" y="18" width="2" height="2" fill="#7a4406"/><rect x="20" y="18" width="2" height="2" fill="#7a4406"/></svg>
<span class="t" style="left:171.37px;top:651.57px;font-size:27px;font-weight:bold;color:#000;transform:scaleX(1.0752);">key</span>
<span class="t" style="left:219.85px;top:651.57px;font-size:27px;font-weight:bold;color:#000;transform:scaleX(1.0398);">Context</span>
<span class="t" style="left:331.68px;top:651.57px;font-size:27px;font-weight:normal;color:#000;transform:scaleX(1.1670);">of</span>
<svg style="left:368px;top:652px" width="28" height="28" viewBox="0 0 28 28"><rect x="1" y="1" width="26" height="26" rx="1.6" fill="#fff" stroke="#8e8e8e" stroke-width="2"/><rect x="7.8" y="5.8" width="12.4" height="14.4" rx="5.2" ry="6" fill="none" stroke="#ff8000" stroke-width="3.6"/></svg>
<span class="t" style="left:407.79px;top:651.57px;font-size:27px;font-weight:normal;color:#000;transform:scaleX(1.0680);">org</span>
<span class="t" style="left:449.64px;top:651.57px;font-size:27px;font-weight:normal;color:#000;transform:scaleX(0.9981);">.apache</span>
<span class="t" style="left:545.07px;top:651.57px;font-size:27px;font-weight:normal;color:#000;transform:scaleX(1.1870);">.flink</span>
<span class="t" style="left:611.21px;top:651.57px;font-size:27px;font-weight:normal;color:#000;transform:scaleX(1.0899);">.runtime</span>
<span class="t" style="left:717.59px;top:651.57px;font-size:27px;font-weight:normal;color:#000;transform:scaleX(1.0600);">.state</span>
<span class="t" style="left:787.73px;top:651.57px;font-size:27px;font-weight:normal;color:#000;transform:scaleX(1.0035);">.heap</span>
<span class="t" style="left:855.51px;top:651.57px;font-size:27px;font-weight:normal;color:#000;transform:scaleX(1.0096);">.CopyOnWriteStateTable</span>
<span class="t" style="left:1875.23px;top:651.57px;font-size:27px;font-weight:normal;color:#000;transform:scaleX(1.0600);">1,042,158,616</span>
<span class="t" style="left:2262.00px;top:651.57px;font-size:27px;font-weight:normal;color:#000;transform:scaleX(1.0600);">64</span>
<svg style="left:99px;top:697px" width="15" height="18" viewBox="0 0 15 18"><path d="M0 0L14.6 9L0 18z" fill="#8c8c8c"/></svg>
<svg style="left:134px;top:696px" width="24" height="20" viewBox="0 0 24 20" shape-rendering="crispEdges"><rect x="2" y="0" width="2" height="2" fill="#6e5634"/><rect x="4" y="0" width="2" height="2" fill="#6e5634"/><rect x="6" y="0" width="2" height="2" fill="#6e5634"/><rect x="8" y="0" width="2" height="2" fill="#6e5634"/><rect x="10" y="0" width="2" height="2" fill="#6e5634"/><rect x="12" y="0" width="2" height="2" fill="#6e5634"/><rect x="0" y="2" width="2" height="2" fill="#6e5634"/><rect x="2" y="2" width="2" height="2" fill="#ffc04f"/><rect x="4" y="2" width="2" height="2" fill="#ffc04f"/><rect x="6" y="2" width="2" height="2" fill="#ffc04f"/><rect x="8" y="2" width="2" height="2" fill="#ffc04f"/><rect x="10" y="2" width="2" height="2" fill="#ffc04f"/><rect x="12" y="2" width="2" height="2" fill="#f39a26"/><rect x="14" y="2" width="2" height="2" fill="#c4690c"/><rect x="0" y="4" width="2" height="2" fill="#6e5634"/><rect x="2" y="4" width="2" height="2" fill="#ffc04f"/><rect x="4" y="4" width="2" height="2" fill="#fbd98a"/><rect x="6" y="4" width="2" height="2" fill="#c4690c"/><rect x="8" y="4" width="2" height="2" fill="#c4690c"/><rect x="10" y="4" width="2" height="2" fill="#6e5634"/><rect x="12" y="4" width="2" height="2" fill="#6e5634"/><rect x="0" y="6" width="2" height="2" fill="#6e5634"/><rect x="2" y="6" width="2" height="2" fill="#ffc04f"/><rect x="4" y="6" width="2" height="2" fill="#c4690c"/><rect x="6" y="6" width="2" height="2" fill="#fbd98a"/><rect x="8" y="6" width="2" height="2" fill="#f39a26"/><rect x="10" y="6" width="2" height="2" fill="#c4690c"/><rect x="0" y="8" width="2" height="2" fill="#6e5634"/><rect x="2" y="8" width="2" height="2" fill="#ffc04f"/><rect x="4" y="8" width="2" height="2" fill="#c4690c"/><rect x="6" y="8" width="2" height="2" fill="#f39a26"/><rect x="8" y="8" width="2" height="2" fill="#fbd98a"/><rect x="10" y="8" width="2" height="2" fill="#f39a26"/><rect x="12" y="8" width="2" height="2" fill="#c4690c"/><rect x="0" y="10" width="2" height="2" fill="#6e5634"/><rect x="2" y="10" width="2" height="2" fill="#ffc04f"/><rect x="4" y="10" width="2" height="2" fill="#6e5634"/><rect x="6" y="10" width="2" height="2" fill="#c4690c"/><rect x="8" y="10" width="2" height="2" fill="#f39a26"/><rect x="10" y="10" width="2" height="2" fill="#fbd98a"/><rect x="12" y="10" width="2" height="2" fill="#f39a26"/><rect x="14" y="10" width="2" height="2" fill="#c4690c"/><rect x="0" y="12" width="2" height="2" fill="#6e5634"/><rect x="2" y="12" width="2" height="2" fill="#f39a26"/><rect x="4" y="12" width="2" height="2" fill="#6e5634"/><rect x="8" y="12" width="2" height="2" fill="#c4690c"/><rect x="10" y="12" width="2" height="2" fill="#f39a26"/><rect x="12" y="12" width="2" height="2" fill="#fbd98a"/><rect x="14" y="12" width="2" height="2" fill="#f39a26"/><rect x="16" y="12" width="2" height="2" fill="#c4690c"/><rect x="18" y="12" width="2" height="2" fill="#c4690c"/><rect x="20" y="12" width="2" height="2" fill="#c4690c"/><rect x="2" y="14" width="2" height="2" fill="#c4690c"/><rect x="10" y="14" width="2" height="2" fill="#c4690c"/><rect x="12" y="14" width="2" height="2" fill="#f39a26"/><rect x="14" y="14" width="2" height="2" fill="#fbd98a"/><rect x="16" y="14" width="2" height="2" fill="#fbd98a"/><rect x="18" y="14" width="2" height="2" fill="#fbd98a"/><rect x="20" y="14" width="2" height="2" fill="#f39a26"/><rect x="22" y="14" width="2" height="2" fill="#c4690c"/><rect x="12" y="16" width="2" height="2" fill="#7a4406"/><rect x="14" y="16" width="2" height="2" fill="#f39a26"/><rect x="16" y="16" width="2" height="2" fill="#f39a26"/><rect x="18" y="16" width="2" height="2" fill="#f39a26"/><rect x="20" y="16" width="2" height="2" fill="#f39a26"/><rect x="22" y="16" width="2" height="2" fill="#c4690c"/><rect x="14" y="18" width="2" height="2" fill="#7a4406"/><rect x="16" y="18" width="2" height="2" fill="#7a4406"/><rect x="18" y="18" width="2" height="2" fill="#7a4406"/><rect x="20" y="18" width="2" height="2" fill="#7a4406"/></svg>
<span class="t" style="left:171.37px;top:691.57px;font-size:27px;font-weight:bold;color:#000;transform:scaleX(1.0752);">key</span>
<span class="t" style="left:219.85px;top:691.57px;font-size:27px;font-weight:bold;color:#000;transform:scaleX(1.0398);">Context</span>
<span class="t" style="left:331.68px;top:691.57px;font-size:27px;font-weight:normal;color:#000;transform:scaleX(1.1670);">of</span>
<svg style="left:368px;top:692px" width="28" height="28" viewBox="0 0 28 28"><rect x="1" y="1" width="26" height="26" rx="1.6" fill="#fff" stroke="#8e8e8e" stroke-width="2"/><rect x="7.8" y="5.8" width="12.4" height="14.4" rx="5.2" ry="6" fill="none" stroke="#ff8000" stroke-width="3.6"/></svg>
<span class="t" style="left:407.79px;top:691.57px;font-size:27px;font-weight:normal;color:#000;transform:scaleX(1.0680);">org</span>
<span class="t" style="left:449.64px;top:691.57px;font-size:27px;font-weight:normal;color:#000;transform:scaleX(0.9981);">.apache</span>
<span class="t" style="left:545.07px;top:691.57px;font-size:27px;font-weight:normal;color:#000;transform:scaleX(1.1870);">.flink</span>
<span class="t" style="left:611.21px;top:691.57px;font-size:27px;font-weight:normal;color:#000;transform:scaleX(1.0899);">.runtime</span>
<span class="t" style="left:717.59px;top:691.57px;font-size:27px;font-weight:normal;color:#000;transform:scaleX(1.0600);">.state</span>
<span class="t" style="left:787.73px;top:691.57px;font-size:27px;font-weight:normal;color:#000;transform:scaleX(1.0035);">.heap</span>
<span class="t" style="left:855.51px;top:691.57px;font-size:27px;font-weight:normal;color:#000;transform:scaleX(1.0096);">.CopyOnWriteStateTable</span>
<span class="t" style="left:1914.60px;top:691.57px;font-size:27px;font-weight:normal;color:#000;transform:scaleX(1.0600);">30,765,864</span>
<span class="t" style="left:2262.00px;top:691.57px;font-size:27px;font-weight:normal;color:#000;transform:scaleX(1.0600);">64</span>
<div style="left:24px;top:726px;width:2296px;height:40px;background:#f2f2f2"></div>
<svg style="left:99px;top:737px" width="15" height="18" viewBox="0 0 15 18"><path d="M0 0L14.6 9L0 18z" fill="#8c8c8c"/></svg>
<svg style="left:134px;top:736px" width="24" height="20" viewBox="0 0 24 20" shape-rendering="crispEdges"><rect x="2" y="0" width="2" height="2" fill="#6e5634"/><rect x="4" y="0" width="2" height="2" fill="#6e5634"/><rect x="6" y="0" width="2" height="2" fill="#6e5634"/><rect x="8" y="0" width="2" height="2" fill="#6e5634"/><rect x="10" y="0" width="2" height="2" fill="#6e5634"/><rect x="12" y="0" width="2" height="2" fill="#6e5634"/><rect x="0" y="2" width="2" height="2" fill="#6e5634"/><rect x="2" y="2" width="2" height="2" fill="#ffc04f"/><rect x="4" y="2" width="2" height="2" fill="#ffc04f"/><rect x="6" y="2" width="2" height="2" fill="#ffc04f"/><rect x="8" y="2" width="2" height="2" fill="#ffc04f"/><rect x="10" y="2" width="2" height="2" fill="#ffc04f"/><rect x="12" y="2" width="2" height="2" fill="#f39a26"/><rect x="14" y="2" width="2" height="2" fill="#c4690c"/><rect x="0" y="4" width="2" height="2" fill="#6e5634"/><rect x="2" y="4" width="2" height="2" fill="#ffc04f"/><rect x="4" y="4" width="2" height="2" fill="#fbd98a"/><rect x="6" y="4" width="2" height="2" fill="#c4690c"/><rect x="8" y="4" width="2" height="2" fill="#c4690c"/><rect x="10" y="4" width="2" height="2" fill="#6e5634"/><rect x="12" y="4" width="2" height="2" fill="#6e5634"/><rect x="0" y="6" width="2" height="2" fill="#6e5634"/><rect x="2" y="6" width="2" height="2" fill="#ffc04f"/><rect x="4" y="6" width="2" height="2" fill="#c4690c"/><rect x="6" y="6" width="2" height="2" fill="#fbd98a"/><rect x="8" y="6" width="2" height="2" fill="#f39a26"/><rect x="10" y="6" width="2" height="2" fill="#c4690c"/><rect x="0" y="8" width="2" height="2" fill="#6e5634"/><rect x="2" y="8" width="2" height="2" fill="#ffc04f"/><rect x="4" y="8" width="2" height="2" fill="#c4690c"/><rect x="6" y="8" width="2" height="2" fill="#f39a26"/><rect x="8" y="8" width="2" height="2" fill="#fbd98a"/><rect x="10" y="8" width="2" height="2" fill="#f39a26"/><rect x="12" y="8" width="2" height="2" fill="#c4690c"/><rect x="0" y="10" width="2" height="2" fill="#6e5634"/><rect x="2" y="10" width="2" height="2" fill="#ffc04f"/><rect x="4" y="10" width="2" height="2" fill="#6e5634"/><rect x="6" y="10" width="2" height="2" fill="#c4690c"/><rect x="8" y="10" width="2" height="2" fill="#f39a26"/><rect x="10" y="10" width="2" height="2" fill="#fbd98a"/><rect x="12" y="10" width="2" height="2" fill="#f39a26"/><rect x="14" y="10" width="2" height="2" fill="#c4690c"/><rect x="0" y="12" width="2" height="2" fill="#6e5634"/><rect x="2" y="12" width="2" height="2" fill="#f39a26"/><rect x="4" y="12" width="2" height="2" fill="#6e5634"/><rect x="8" y="12" width="2" height="2" fill="#c4690c"/><rect x="10" y="12" width="2" height="2" fill="#f39a26"/><rect x="12" y="12" width="2" height="2" fill="#fbd98a"/><rect x="14" y="12" width="2" height="2" fill="#f39a26"/><rect x="16" y="12" width="2" height="2" fill="#c4690c"/><rect x="18" y="12" width="2" height="2" fill="#c4690c"/><rect x="20" y="12" width="2" height="2" fill="#c4690c"/><rect x="2" y="14" width="2" height="2" fill="#c4690c"/><rect x="10" y="14" width="2" height="2" fill="#c4690c"/><rect x="12" y="14" width="2" height="2" fill="#f39a26"/><rect x="14" y="14" width="2" height="2" fill="#fbd98a"/><rect x="16" y="14" width="2" height="2" fill="#fbd98a"/><rect x="18" y="14" width="2" height="2" fill="#fbd98a"/><rect x="20" y="14" width="2" height="2" fill="#f39a26"/><rect x="22" y="14" width="2" height="2" fill="#c4690c"/><rect x="12" y="16" width="2" height="2" fill="#7a4406"/><rect x="14" y="16" width="2" height="2" fill="#f39a26"/><rect x="16" y="16" width="2" height="2" fill="#f39a26"/><rect x="18" y="16" width="2" height="2" fill="#f39a26"/><rect x="20" y="16" width="2" height="2" fill="#f39a26"/><rect x="22" y="16" width="2" height="2" fill="#c4690c"/><rect x="14" y="18" width="2" height="2" fill="#7a4406"/><rect x="16" y="18" width="2" height="2" fill="#7a4406"/><rect x="18" y="18" width="2" height="2" fill="#7a4406"/><rect x="20" y="18" width="2" height="2" fill="#7a4406"/></svg>
<span class="t" style="left:171.37px;top:731.57px;font-size:27px;font-weight:bold;color:#000;transform:scaleX(1.0752);">key</span>
<span class="t" style="left:219.85px;top:731.57px;font-size:27px;font-weight:bold;color:#000;transform:scaleX(1.0398);">Context</span>
<span class="t" style="left:331.68px;top:731.57px;font-size:27px;font-weight:normal;color:#000;transform:scaleX(1.1670);">of</span>
<svg style="left:368px;top:732px" width="28" height="28" viewBox="0 0 28 28"><rect x="1" y="1" width="26" height="26" rx="1.6" fill="#fff" stroke="#8e8e8e" stroke-width="2"/><rect x="7.8" y="5.8" width="12.4" height="14.4" rx="5.2" ry="6" fill="none" stroke="#ff8000" stroke-width="3.6"/></svg>
<span class="t" style="left:407.79px;top:731.57px;font-size:27px;font-weight:normal;color:#000;transform:scaleX(1.0680);">org</span>
<span class="t" style="left:449.64px;top:731.57px;font-size:27px;font-weight:normal;color:#000;transform:scaleX(0.9981);">.apache</span>
<span class="t" style="left:545.07px;top:731.57px;font-size:27px;font-weight:normal;color:#000;transform:scaleX(1.1870);">.flink</span>
<span class="t" style="left:611.21px;top:731.57px;font-size:27px;font-weight:normal;color:#000;transform:scaleX(1.0899);">.runtime</span>
<span class="t" style="left:717.59px;top:731.57px;font-size:27px;font-weight:normal;color:#000;transform:scaleX(1.0600);">.state</span>
<span class="t" style="left:787.73px;top:731.57px;font-size:27px;font-weight:normal;color:#000;transform:scaleX(1.0035);">.heap</span>
<span class="t" style="left:855.51px;top:731.57px;font-size:27px;font-weight:normal;color:#000;transform:scaleX(1.0096);">.CopyOnWriteStateTable</span>
<span class="t" style="left:1915.02px;top:731.57px;font-size:27px;font-weight:normal;color:#000;transform:scaleX(1.0600);">20,407,736</span>
<span class="t" style="left:2262.00px;top:731.57px;font-size:27px;font-weight:normal;color:#000;transform:scaleX(1.0600);">64</span>
<svg style="left:99px;top:777px" width="15" height="18" viewBox="0 0 15 18"><path d="M0 0L14.6 9L0 18z" fill="#8c8c8c"/></svg>
<svg style="left:134px;top:776px" width="24" height="20" viewBox="0 0 24 20" shape-rendering="crispEdges"><rect x="2" y="0" width="2" height="2" fill="#6e5634"/><rect x="4" y="0" width="2" height="2" fill="#6e5634"/><rect x="6" y="0" width="2" height="2" fill="#6e5634"/><rect x="8" y="0" width="2" height="2" fill="#6e5634"/><rect x="10" y="0" width="2" height="2" fill="#6e5634"/><rect x="12" y="0" width="2" height="2" fill="#6e5634"/><rect x="0" y="2" width="2" height="2" fill="#6e5634"/><rect x="2" y="2" width="2" height="2" fill="#ffc04f"/><rect x="4" y="2" width="2" height="2" fill="#ffc04f"/><rect x="6" y="2" width="2" height="2" fill="#ffc04f"/><rect x="8" y="2" width="2" height="2" fill="#ffc04f"/><rect x="10" y="2" width="2" height="2" fill="#ffc04f"/><rect x="12" y="2" width="2" height="2" fill="#f39a26"/><rect x="14" y="2" width="2" height="2" fill="#c4690c"/><rect x="0" y="4" width="2" height="2" fill="#6e5634"/><rect x="2" y="4" width="2" height="2" fill="#ffc04f"/><rect x="4" y="4" width="2" height="2" fill="#fbd98a"/><rect x="6" y="4" width="2" height="2" fill="#c4690c"/><rect x="8" y="4" width="2" height="2" fill="#c4690c"/><rect x="10" y="4" width="2" height="2" fill="#6e5634"/><rect x="12" y="4" width="2" height="2" fill="#6e5634"/><rect x="0" y="6" width="2" height="2" fill="#6e5634"/><rect x="2" y="6" width="2" height="2" fill="#ffc04f"/><rect x="4" y="6" width="2" height="2" fill="#c4690c"/><rect x="6" y="6" width="2" height="2" fill="#fbd98a"/><rect x="8" y="6" width="2" height="2" fill="#f39a26"/><rect x="10" y="6" width="2" height="2" fill="#c4690c"/><rect x="0" y="8" width="2" height="2" fill="#6e5634"/><rect x="2" y="8" width="2" height="2" fill="#ffc04f"/><rect x="4" y="8" width="2" height="2" fill="#c4690c"/><rect x="6" y="8" width="2" height="2" fill="#f39a26"/><rect x="8" y="8" width="2" height="2" fill="#fbd98a"/><rect x="10" y="8" width="2" height="2" fill="#f39a26"/><rect x="12" y="8" width="2" height="2" fill="#c4690c"/><rect x="0" y="10" width="2" height="2" fill="#6e5634"/><rect x="2" y="10" width="2" height="2" fill="#ffc04f"/><rect x="4" y="10" width="2" height="2" fill="#6e5634"/><rect x="6" y="10" width="2" height="2" fill="#c4690c"/><rect x="8" y="10" width="2" height="2" fill="#f39a26"/><rect x="10" y="10" width="2" height="2" fill="#fbd98a"/><rect x="12" y="10" width="2" height="2" fill="#f39a26"/><rect x="14" y="10" width="2" height="2" fill="#c4690c"/><rect x="0" y="12" width="2" height="2" fill="#6e5634"/><rect x="2" y="12" width="2" height="2" fill="#f39a26"/><rect x="4" y="12" width="2" height="2" fill="#6e5634"/><rect x="8" y="12" width="2" height="2" fill="#c4690c"/><rect x="10" y="12" width="2" height="2" fill="#f39a26"/><rect x="12" y="12" width="2" height="2" fill="#fbd98a"/><rect x="14" y="12" width="2" height="2" fill="#f39a26"/><rect x="16" y="12" width="2" height="2" fill="#c4690c"/><rect x="18" y="12" width="2" height="2" fill="#c4690c"/><rect x="20" y="12" width="2" height="2" fill="#c4690c"/><rect x="2" y="14" width="2" height="2" fill="#c4690c"/><rect x="10" y="14" width="2" height="2" fill="#c4690c"/><rect x="12" y="14" width="2" height="2" fill="#f39a26"/><rect x="14" y="14" width="2" height="2" fill="#fbd98a"/><rect x="16" y="14" width="2" height="2" fill="#fbd98a"/><rect x="18" y="14" width="2" height="2" fill="#fbd98a"/><rect x="20" y="14" width="2" height="2" fill="#f39a26"/><rect x="22" y="14" width="2" height="2" fill="#c4690c"/><rect x="12" y="16" width="2" height="2" fill="#7a4406"/><rect x="14" y="16" width="2" height="2" fill="#f39a26"/><rect x="16" y="16" width="2" height="2" fill="#f39a26"/><rect x="18" y="16" width="2" height="2" fill="#f39a26"/><rect x="20" y="16" width="2" height="2" fill="#f39a26"/><rect x="22" y="16" width="2" height="2" fill="#c4690c"/><rect x="14" y="18" width="2" height="2" fill="#7a4406"/><rect x="16" y="18" width="2" height="2" fill="#7a4406"/><rect x="18" y="18" width="2" height="2" fill="#7a4406"/><rect x="20" y="18" width="2" height="2" fill="#7a4406"/></svg>
<span class="t" style="left:171.37px;top:771.57px;font-size:27px;font-weight:bold;color:#000;transform:scaleX(1.0752);">key</span>
<span class="t" style="left:219.85px;top:771.57px;font-size:27px;font-weight:bold;color:#000;transform:scaleX(1.0398);">Context</span>
<span class="t" style="left:331.68px;top:771.57px;font-size:27px;font-weight:normal;color:#000;transform:scaleX(1.1670);">of</span>
<svg style="left:368px;top:772px" width="28" height="28" viewBox="0 0 28 28"><rect x="1" y="1" width="26" height="26" rx="1.6" fill="#fff" stroke="#8e8e8e" stroke-width="2"/><rect x="7.8" y="5.8" width="12.4" height="14.4" rx="5.2" ry="6" fill="none" stroke="#ff8000" stroke-width="3.6"/></svg>
<span class="t" style="left:407.79px;top:771.57px;font-size:27px;font-weight:normal;color:#000;transform:scaleX(1.0680);">org</span>
<span class="t" style="left:449.64px;top:771.57px;font-size:27px;font-weight:normal;color:#000;transform:scaleX(0.9981);">.apache</span>
<span class="t" style="left:545.07px;top:771.57px;font-size:27px;font-weight:normal;color:#000;transform:scaleX(1.1870);">.flink</span>
<span class="t" style="left:611.21px;top:771.57px;font-size:27px;font-weight:normal;color:#000;transform:scaleX(1.0899);">.runtime</span>
<span class="t" style="left:717.59px;top:771.57px;font-size:27px;font-weight:normal;color:#000;transform:scaleX(1.0600);">.state</span>
<span class="t" style="left:787.73px;top:771.57px;font-size:27px;font-weight:normal;color:#000;transform:scaleX(1.0035);">.heap</span>
<span class="t" style="left:855.51px;top:771.57px;font-size:27px;font-weight:normal;color:#000;transform:scaleX(1.0096);">.CopyOnWriteStateTable</span>
<span class="t" style="left:1930.80px;top:771.57px;font-size:27px;font-weight:normal;color:#000;transform:scaleX(1.0600);">2,454,160</span>
<span class="t" style="left:2262.00px;top:771.57px;font-size:27px;font-weight:normal;color:#000;transform:scaleX(1.0600);">64</span>
<div style="left:24px;top:806px;width:2296px;height:40px;background:#f2f2f2"></div>
<svg style="left:99px;top:817px" width="15" height="18" viewBox="0 0 15 18"><path d="M0 0L14.6 9L0 18z" fill="#8c8c8c"/></svg>
<svg style="left:134px;top:816px" width="24" height="20" viewBox="0 0 24 20" shape-rendering="crispEdges"><rect x="2" y="0" width="2" height="2" fill="#6e5634"/><rect x="4" y="0" width="2" height="2" fill="#6e5634"/><rect x="6" y="0" width="2" height="2" fill="#6e5634"/><rect x="8" y="0" width="2" height="2" fill="#6e5634"/><rect x="10" y="0" width="2" height="2" fill="#6e5634"/><rect x="12" y="0" width="2" height="2" fill="#6e5634"/><rect x="0" y="2" width="2" height="2" fill="#6e5634"/><rect x="2" y="2" width="2" height="2" fill="#ffc04f"/><rect x="4" y="2" width="2" height="2" fill="#ffc04f"/><rect x="6" y="2" width="2" height="2" fill="#ffc04f"/><rect x="8" y="2" width="2" height="2" fill="#ffc04f"/><rect x="10" y="2" width="2" height="2" fill="#ffc04f"/><rect x="12" y="2" width="2" height="2" fill="#f39a26"/><rect x="14" y="2" width="2" height="2" fill="#c4690c"/><rect x="0" y="4" width="2" height="2" fill="#6e5634"/><rect x="2" y="4" width="2" height="2" fill="#ffc04f"/><rect x="4" y="4" width="2" height="2" fill="#fbd98a"/><rect x="6" y="4" width="2" height="2" fill="#c4690c"/><rect x="8" y="4" width="2" height="2" fill="#c4690c"/><rect x="10" y="4" width="2" height="2" fill="#6e5634"/><rect x="12" y="4" width="2" height="2" fill="#6e5634"/><rect x="0" y="6" width="2" height="2" fill="#6e5634"/><rect x="2" y="6" width="2" height="2" fill="#ffc04f"/><rect x="4" y="6" width="2" height="2" fill="#c4690c"/><rect x="6" y="6" width="2" height="2" fill="#fbd98a"/><rect x="8" y="6" width="2" height="2" fill="#f39a26"/><rect x="10" y="6" width="2" height="2" fill="#c4690c"/><rect x="0" y="8" width="2" height="2" fill="#6e5634"/><rect x="2" y="8" width="2" height="2" fill="#ffc04f"/><rect x="4" y="8" width="2" height="2" fill="#c4690c"/><rect x="6" y="8" width="2" height="2" fill="#f39a26"/><rect x="8" y="8" width="2" height="2" fill="#fbd98a"/><rect x="10" y="8" width="2" height="2" fill="#f39a26"/><rect x="12" y="8" width="2" height="2" fill="#c4690c"/><rect x="0" y="10" width="2" height="2" fill="#6e5634"/><rect x="2" y="10" width="2" height="2" fill="#ffc04f"/><rect x="4" y="10" width="2" height="2" fill="#6e5634"/><rect x="6" y="10" width="2" height="2" fill="#c4690c"/><rect x="8" y="10" width="2" height="2" fill="#f39a26"/><rect x="10" y="10" width="2" height="2" fill="#fbd98a"/><rect x="12" y="10" width="2" height="2" fill="#f39a26"/><rect x="14" y="10" width="2" height="2" fill="#c4690c"/><rect x="0" y="12" width="2" height="2" fill="#6e5634"/><rect x="2" y="12" width="2" height="2" fill="#f39a26"/><rect x="4" y="12" width="2" height="2" fill="#6e5634"/><rect x="8" y="12" width="2" height="2" fill="#c4690c"/><rect x="10" y="12" width="2" height="2" fill="#f39a26"/><rect x="12" y="12" width="2" height="2" fill="#fbd98a"/><rect x="14" y="12" width="2" height="2" fill="#f39a26"/><rect x="16" y="12" width="2" height="2" fill="#c4690c"/><rect x="18" y="12" width="2" height="2" fill="#c4690c"/><rect x="20" y="12" width="2" height="2" fill="#c4690c"/><rect x="2" y="14" width="2" height="2" fill="#c4690c"/><rect x="10" y="14" width="2" height="2" fill="#c4690c"/><rect x="12" y="14" width="2" height="2" fill="#f39a26"/><rect x="14" y="14" width="2" height="2" fill="#fbd98a"/><rect x="16" y="14" width="2" height="2" fill="#fbd98a"/><rect x="18" y="14" width="2" height="2" fill="#fbd98a"/><rect x="20" y="14" width="2" height="2" fill="#f39a26"/><rect x="22" y="14" width="2" height="2" fill="#c4690c"/><rect x="12" y="16" width="2" height="2" fill="#7a4406"/><rect x="14" y="16" width="2" height="2" fill="#f39a26"/><rect x="16" y="16" width="2" height="2" fill="#f39a26"/><rect x="18" y="16" width="2" height="2" fill="#f39a26"/><rect x="20" y="16" width="2" height="2" fill="#f39a26"/><rect x="22" y="16" width="2" height="2" fill="#c4690c"/><rect x="14" y="18" width="2" height="2" fill="#7a4406"/><rect x="16" y="18" width="2" height="2" fill="#7a4406"/><rect x="18" y="18" width="2" height="2" fill="#7a4406"/><rect x="20" y="18" width="2" height="2" fill="#7a4406"/></svg>
<span class="t" style="left:171.37px;top:811.57px;font-size:27px;font-weight:bold;color:#000;transform:scaleX(1.0752);">key</span>
<span class="t" style="left:219.85px;top:811.57px;font-size:27px;font-weight:bold;color:#000;transform:scaleX(1.0398);">Context</span>
<span class="t" style="left:331.68px;top:811.57px;font-size:27px;font-weight:normal;color:#000;transform:scaleX(1.1670);">of</span>
<svg style="left:368px;top:812px" width="28" height="28" viewBox="0 0 28 28"><rect x="1" y="1" width="26" height="26" rx="1.6" fill="#fff" stroke="#8e8e8e" stroke-width="2"/><rect x="7.8" y="5.8" width="12.4" height="14.4" rx="5.2" ry="6" fill="none" stroke="#ff8000" stroke-width="3.6"/></svg>
<span class="t" style="left:407.79px;top:811.57px;font-size:27px;font-weight:normal;color:#000;transform:scaleX(1.0680);">org</span>
<span class="t" style="left:449.64px;top:811.57px;font-size:27px;font-weight:normal;color:#000;transform:scaleX(0.9981);">.apache</span>
<span class="t" style="left:545.07px;top:811.57px;font-size:27px;font-weight:normal;color:#000;transform:scaleX(1.1870);">.flink</span>
<span class="t" style="left:611.21px;top:811.57px;font-size:27px;font-weight:normal;color:#000;transform:scaleX(1.0899);">.runtime</span>
<span class="t" style="left:717.59px;top:811.57px;font-size:27px;font-weight:normal;color:#000;transform:scaleX(1.0600);">.state</span>
<span class="t" style="left:787.73px;top:811.57px;font-size:27px;font-weight:normal;color:#000;transform:scaleX(1.0035);">.heap</span>
<span class="t" style="left:855.51px;top:811.57px;font-size:27px;font-weight:normal;color:#000;transform:scaleX(1.0096);">.CopyOnWriteStateTable</span>
<span class="t" style="left:1931.12px;top:811.57px;font-size:27px;font-weight:normal;color:#000;transform:scaleX(1.0600);">1,365,832</span>
<span class="t" style="left:2262.00px;top:811.57px;font-size:27px;font-weight:normal;color:#000;transform:scaleX(1.0600);">64</span>
<svg style="left:99px;top:857px" width="15" height="18" viewBox="0 0 15 18"><path d="M0 0L14.6 9L0 18z" fill="#8c8c8c"/></svg>
<svg style="left:134px;top:856px" width="24" height="20" viewBox="0 0 24 20" shape-rendering="crispEdges"><rect x="2" y="0" width="2" height="2" fill="#6e5634"/><rect x="4" y="0" width="2" height="2" fill="#6e5634"/><rect x="6" y="0" width="2" height="2" fill="#6e5634"/><rect x="8" y="0" width="2" height="2" fill="#6e5634"/><rect x="10" y="0" width="2" height="2" fill="#6e5634"/><rect x="12" y="0" width="2" height="2" fill="#6e5634"/><rect x="0" y="2" width="2" height="2" fill="#6e5634"/><rect x="2" y="2" width="2" height="2" fill="#ffc04f"/><rect x="4" y="2" width="2" height="2" fill="#ffc04f"/><rect x="6" y="2" width="2" height="2" fill="#ffc04f"/><rect x="8" y="2" width="2" height="2" fill="#ffc04f"/><rect x="10" y="2" width="2" height="2" fill="#ffc04f"/><rect x="12" y="2" width="2" height="2" fill="#f39a26"/><rect x="14" y="2" width="2" height="2" fill="#c4690c"/><rect x="0" y="4" width="2" height="2" fill="#6e5634"/><rect x="2" y="4" width="2" height="2" fill="#ffc04f"/><rect x="4" y="4" width="2" height="2" fill="#fbd98a"/><rect x="6" y="4" width="2" height="2" fill="#c4690c"/><rect x="8" y="4" width="2" height="2" fill="#c4690c"/><rect x="10" y="4" width="2" height="2" fill="#6e5634"/><rect x="12" y="4" width="2" height="2" fill="#6e5634"/><rect x="0" y="6" width="2" height="2" fill="#6e5634"/><rect x="2" y="6" width="2" height="2" fill="#ffc04f"/><rect x="4" y="6" width="2" height="2" fill="#c4690c"/><rect x="6" y="6" width="2" height="2" fill="#fbd98a"/><rect x="8" y="6" width="2" height="2" fill="#f39a26"/><rect x="10" y="6" width="2" height="2" fill="#c4690c"/><rect x="0" y="8" width="2" height="2" fill="#6e5634"/><rect x="2" y="8" width="2" height="2" fill="#ffc04f"/><rect x="4" y="8" width="2" height="2" fill="#c4690c"/><rect x="6" y="8" width="2" height="2" fill="#f39a26"/><rect x="8" y="8" width="2" height="2" fill="#fbd98a"/><rect x="10" y="8" width="2" height="2" fill="#f39a26"/><rect x="12" y="8" width="2" height="2" fill="#c4690c"/><rect x="0" y="10" width="2" height="2" fill="#6e5634"/><rect x="2" y="10" width="2" height="2" fill="#ffc04f"/><rect x="4" y="10" width="2" height="2" fill="#6e5634"/><rect x="6" y="10" width="2" height="2" fill="#c4690c"/><rect x="8" y="10" width="2" height="2" fill="#f39a26"/><rect x="10" y="10" width="2" height="2" fill="#fbd98a"/><rect x="12" y="10" width="2" height="2" fill="#f39a26"/><rect x="14" y="10" width="2" height="2" fill="#c4690c"/><rect x="0" y="12" width="2" height="2" fill="#6e5634"/><rect x="2" y="12" width="2" height="2" fill="#f39a26"/><rect x="4" y="12" width="2" height="2" fill="#6e5634"/><rect x="8" y="12" width="2" height="2" fill="#c4690c"/><rect x="10" y="12" width="2" height="2" fill="#f39a26"/><rect x="12" y="12" width="2" height="2" fill="#fbd98a"/><rect x="14" y="12" width="2" height="2" fill="#f39a26"/><rect x="16" y="12" width="2" height="2" fill="#c4690c"/><rect x="18" y="12" width="2" height="2" fill="#c4690c"/><rect x="20" y="12" width="2" height="2" fill="#c4690c"/><rect x="2" y="14" width="2" height="2" fill="#c4690c"/><rect x="10" y="14" width="2" height="2" fill="#c4690c"/><rect x="12" y="14" width="2" height="2" fill="#f39a26"/><rect x="14" y="14" width="2" height="2" fill="#fbd98a"/><rect x="16" y="14" width="2" height="2" fill="#fbd98a"/><rect x="18" y="14" width="2" height="2" fill="#fbd98a"/><rect x="20" y="14" width="2" height="2" fill="#f39a26"/><rect x="22" y="14" width="2" height="2" fill="#c4690c"/><rect x="12" y="16" width="2" height="2" fill="#7a4406"/><rect x="14" y="16" width="2" height="2" fill="#f39a26"/><rect x="16" y="16" width="2" height="2" fill="#f39a26"/><rect x="18" y="16" width="2" height="2" fill="#f39a26"/><rect x="20" y="16" width="2" height="2" fill="#f39a26"/><rect x="22" y="16" width="2" height="2" fill="#c4690c"/><rect x="14" y="18" width="2" height="2" fill="#7a4406"/><rect x="16" y="18" width="2" height="2" fill="#7a4406"/><rect x="18" y="18" width="2" height="2" fill="#7a4406"/><rect x="20" y="18" width="2" height="2" fill="#7a4406"/></svg>
<span class="t" style="left:171.37px;top:851.57px;font-size:27px;font-weight:bold;color:#000;transform:scaleX(1.0752);">key</span>
<span class="t" style="left:219.85px;top:851.57px;font-size:27px;font-weight:bold;color:#000;transform:scaleX(1.0398);">Context</span>
<span class="t" style="left:331.68px;top:851.57px;font-size:27px;font-weight:normal;color:#000;transform:scaleX(1.1670);">of</span>
<svg style="left:368px;top:852px" width="28" height="28" viewBox="0 0 28 28"><rect x="1" y="1" width="26" height="26" rx="1.6" fill="#fff" stroke="#8e8e8e" stroke-width="2"/><rect x="7.8" y="5.8" width="12.4" height="14.4" rx="5.2" ry="6" fill="none" stroke="#ff8000" stroke-width="3.6"/></svg>
<span class="t" style="left:407.79px;top:851.57px;font-size:27px;font-weight:normal;color:#000;transform:scaleX(1.0680);">org</span>
<span class="t" style="left:449.64px;top:851.57px;font-size:27px;font-weight:normal;color:#000;transform:scaleX(0.9981);">.apache</span>
<span class="t" style="left:545.07px;top:851.57px;font-size:27px;font-weight:normal;color:#000;transform:scaleX(1.1870);">.flink</span>
<span class="t" style="left:611.21px;top:851.57px;font-size:27px;font-weight:normal;color:#000;transform:scaleX(1.0899);">.runtime</span>
<span class="t" style="left:717.59px;top:851.57px;font-size:27px;font-weight:normal;color:#000;transform:scaleX(1.0600);">.state</span>
<span class="t" style="left:787.73px;top:851.57px;font-size:27px;font-weight:normal;color:#000;transform:scaleX(1.0035);">.heap</span>
<span class="t" style="left:855.51px;top:851.57px;font-size:27px;font-weight:normal;color:#000;transform:scaleX(1.0096);">.CopyOnWriteStateTable</span>
<span class="t" style="left:1970.90px;top:851.57px;font-size:27px;font-weight:normal;color:#000;transform:scaleX(1.0600);">33,032</span>
<span class="t" style="left:2262.00px;top:851.57px;font-size:27px;font-weight:normal;color:#000;transform:scaleX(1.0600);">64</span>
<div style="left:24px;top:886px;width:2296px;height:40px;background:#f2f2f2"></div>
<svg style="left:99px;top:897px" width="15" height="18" viewBox="0 0 15 18"><path d="M0 0L14.6 9L0 18z" fill="#8c8c8c"/></svg>
<svg style="left:134px;top:896px" width="24" height="20" viewBox="0 0 24 20" shape-rendering="crispEdges"><rect x="2" y="0" width="2" height="2" fill="#6e5634"/><rect x="4" y="0" width="2" height="2" fill="#6e5634"/><rect x="6" y="0" width="2" height="2" fill="#6e5634"/><rect x="8" y="0" width="2" height="2" fill="#6e5634"/><rect x="10" y="0" width="2" height="2" fill="#6e5634"/><rect x="12" y="0" width="2" height="2" fill="#6e5634"/><rect x="0" y="2" width="2" height="2" fill="#6e5634"/><rect x="2" y="2" width="2" height="2" fill="#ffc04f"/><rect x="4" y="2" width="2" height="2" fill="#ffc04f"/><rect x="6" y="2" width="2" height="2" fill="#ffc04f"/><rect x="8" y="2" width="2" height="2" fill="#ffc04f"/><rect x="10" y="2" width="2" height="2" fill="#ffc04f"/><rect x="12" y="2" width="2" height="2" fill="#f39a26"/><rect x="14" y="2" width="2" height="2" fill="#c4690c"/><rect x="0" y="4" width="2" height="2" fill="#6e5634"/><rect x="2" y="4" width="2" height="2" fill="#ffc04f"/><rect x="4" y="4" width="2" height="2" fill="#fbd98a"/><rect x="6" y="4" width="2" height="2" fill="#c4690c"/><rect x="8" y="4" width="2" height="2" fill="#c4690c"/><rect x="10" y="4" width="2" height="2" fill="#6e5634"/><rect x="12" y="4" width="2" height="2" fill="#6e5634"/><rect x="0" y="6" width="2" height="2" fill="#6e5634"/><rect x="2" y="6" width="2" height="2" fill="#ffc04f"/><rect x="4" y="6" width="2" height="2" fill="#c4690c"/><rect x="6" y="6" width="2" height="2" fill="#fbd98a"/><rect x="8" y="6" width="2" height="2" fill="#f39a26"/><rect x="10" y="6" width="2" height="2" fill="#c4690c"/><rect x="0" y="8" width="2" height="2" fill="#6e5634"/><rect x="2" y="8" width="2" height="2" fill="#ffc04f"/><rect x="4" y="8" width="2" height="2" fill="#c4690c"/><rect x="6" y="8" width="2" height="2" fill="#f39a26"/><rect x="8" y="8" width="2" height="2" fill="#fbd98a"/><rect x="10" y="8" width="2" height="2" fill="#f39a26"/><rect x="12" y="8" width="2" height="2" fill="#c4690c"/><rect x="0" y="10" width="2" height="2" fill="#6e5634"/><rect x="2" y="10" width="2" height="2" fill="#ffc04f"/><rect x="4" y="10" width="2" height="2" fill="#6e5634"/><rect x="6" y="10" width="2" height="2" fill="#c4690c"/><rect x="8" y="10" width="2" height="2" fill="#f39a26"/><rect x="10" y="10" width="2" height="2" fill="#fbd98a"/><rect x="12" y="10" width="2" height="2" fill="#f39a26"/><rect x="14" y="10" width="2" height="2" fill="#c4690c"/><rect x="0" y="12" width="2" height="2" fill="#6e5634"/><rect x="2" y="12" width="2" height="2" fill="#f39a26"/><rect x="4" y="12" width="2" height="2" fill="#6e5634"/><rect x="8" y="12" width="2" height="2" fill="#c4690c"/><rect x="10" y="12" width="2" height="2" fill="#f39a26"/><rect x="12" y="12" width="2" height="2" fill="#fbd98a"/><rect x="14" y="12" width="2" height="2" fill="#f39a26"/><rect x="16" y="12" width="2" height="2" fill="#c4690c"/><rect x="18" y="12" width="2" height="2" fill="#c4690c"/><rect x="20" y="12" width="2" height="2" fill="#c4690c"/><rect x="2" y="14" width="2" height="2" fill="#c4690c"/><rect x="10" y="14" width="2" height="2" fill="#c4690c"/><rect x="12" y="14" width="2" height="2" fill="#f39a26"/><rect x="14" y="14" width="2" height="2" fill="#fbd98a"/><rect x="16" y="14" width="2" height="2" fill="#fbd98a"/><rect x="18" y="14" width="2" height="2" fill="#fbd98a"/><rect x="20" y="14" width="2" height="2" fill="#f39a26"/><rect x="22" y="14" width="2" height="2" fill="#c4690c"/><rect x="12" y="16" width="2" height="2" fill="#7a4406"/><rect x="14" y="16" width="2" height="2" fill="#f39a26"/><rect x="16" y="16" width="2" height="2" fill="#f39a26"/><rect x="18" y="16" width="2" height="2" fill="#f39a26"/><rect x="20" y="16" width="2" height="2" fill="#f39a26"/><rect x="22" y="16" width="2" height="2" fill="#c4690c"/><rect x="14" y="18" width="2" height="2" fill="#7a4406"/><rect x="16" y="18" width="2" height="2" fill="#7a4406"/><rect x="18" y="18" width="2" height="2" fill="#7a4406"/><rect x="20" y="18" width="2" height="2" fill="#7a4406"/></svg>
<span class="t" style="left:171.36px;top:891.57px;font-size:27px;font-weight:bold;color:#000;transform:scaleX(1.0815);">keyed</span>
<span class="t" style="left:254.22px;top:891.57px;font-size:27px;font-weight:bold;color:#000;transform:scaleX(1.0007);">State</span>
<span class="t" style="left:320.28px;top:891.57px;font-size:27px;font-weight:bold;color:#000;transform:scaleX(1.0049);">Backend</span>
<span class="t" style="left:441.73px;top:891.57px;font-size:27px;font-weight:normal;color:#000;transform:scaleX(1.1203);">of</span>
<svg style="left:478px;top:892px" width="28" height="28" viewBox="0 0 28 28"><rect x="1" y="1" width="26" height="26" rx="1.6" fill="#fff" stroke="#8e8e8e" stroke-width="2"/><rect x="7.8" y="5.8" width="12.4" height="14.4" rx="5.2" ry="6" fill="none" stroke="#ff8000" stroke-width="3.6"/></svg>
<span class="t" style="left:517.79px;top:891.57px;font-size:27px;font-weight:normal;color:#000;transform:scaleX(1.0655);">org</span>
<span class="t" style="left:559.54px;top:891.57px;font-size:27px;font-weight:normal;color:#000;transform:scaleX(0.9971);">.apache</span>
<span class="t" style="left:655.34px;top:891.57px;font-size:27px;font-weight:normal;color:#000;transform:scaleX(0.9995);">.beam</span>
<span class="t" style="left:730.18px;top:891.57px;font-size:27px;font-weight:normal;color:#000;transform:scaleX(1.0611);">.runners</span>
<span class="t" style="left:834.95px;top:891.57px;font-size:27px;font-weight:normal;color:#000;transform:scaleX(1.1960);">.flink</span>
<span class="t" style="left:901.62px;top:891.57px;font-size:27px;font-weight:normal;color:#000;transform:scaleX(1.0880);">.translation</span>
<span class="t" style="left:1045.47px;top:891.57px;font-size:27px;font-weight:normal;color:#000;transform:scaleX(1.0258);">.wrappers</span>
<span class="t" style="left:1166.97px;top:891.57px;font-size:27px;font-weight:normal;color:#000;transform:scaleX(1.0671);">.streaming</span>
<span class="t" style="left:1301.58px;top:891.57px;font-size:27px;font-weight:normal;color:#000;transform:scaleX(1.0220);">.WindowDoFnOperator</span>
<span class="t" style="left:1970.72px;top:891.57px;font-size:27px;font-weight:normal;color:#000;transform:scaleX(1.0600);">12,456</span>
<span class="t" style="left:2246.37px;top:891.57px;font-size:27px;font-weight:normal;color:#000;transform:scaleX(1.0600);">280</span>
<svg style="left:99px;top:937px" width="15" height="18" viewBox="0 0 15 18"><path d="M0 0L14.6 9L0 18z" fill="#8c8c8c"/></svg>
<svg style="left:134px;top:936px" width="24" height="20" viewBox="0 0 24 20" shape-rendering="crispEdges"><rect x="2" y="0" width="2" height="2" fill="#6e5634"/><rect x="4" y="0" width="2" height="2" fill="#6e5634"/><rect x="6" y="0" width="2" height="2" fill="#6e5634"/><rect x="8" y="0" width="2" height="2" fill="#6e5634"/><rect x="10" y="0" width="2" height="2" fill="#6e5634"/><rect x="12" y="0" width="2" height="2" fill="#6e5634"/><rect x="0" y="2" width="2" height="2" fill="#6e5634"/><rect x="2" y="2" width="2" height="2" fill="#ffc04f"/><rect x="4" y="2" width="2" height="2" fill="#ffc04f"/><rect x="6" y="2" width="2" height="2" fill="#ffc04f"/><rect x="8" y="2" width="2" height="2" fill="#ffc04f"/><rect x="10" y="2" width="2" height="2" fill="#ffc04f"/><rect x="12" y="2" width="2" height="2" fill="#f39a26"/><rect x="14" y="2" width="2" height="2" fill="#c4690c"/><rect x="0" y="4" width="2" height="2" fill="#6e5634"/><rect x="2" y="4" width="2" height="2" fill="#ffc04f"/><rect x="4" y="4" width="2" height="2" fill="#fbd98a"/><rect x="6" y="4" width="2" height="2" fill="#c4690c"/><rect x="8" y="4" width="2" height="2" fill="#c4690c"/><rect x="10" y="4" width="2" height="2" fill="#6e5634"/><rect x="12" y="4" width="2" height="2" fill="#6e5634"/><rect x="0" y="6" width="2" height="2" fill="#6e5634"/><rect x="2" y="6" width="2" height="2" fill="#ffc04f"/><rect x="4" y="6" width="2" height="2" fill="#c4690c"/><rect x="6" y="6" width="2" height="2" fill="#fbd98a"/><rect x="8" y="6" width="2" height="2" fill="#f39a26"/><rect x="10" y="6" width="2" height="2" fill="#c4690c"/><rect x="0" y="8" width="2" height="2" fill="#6e5634"/><rect x="2" y="8" width="2" height="2" fill="#ffc04f"/><rect x="4" y="8" width="2" height="2" fill="#c4690c"/><rect x="6" y="8" width="2" height="2" fill="#f39a26"/><rect x="8" y="8" width="2" height="2" fill="#fbd98a"/><rect x="10" y="8" width="2" height="2" fill="#f39a26"/><rect x="12" y="8" width="2" height="2" fill="#c4690c"/><rect x="0" y="10" width="2" height="2" fill="#6e5634"/><rect x="2" y="10" width="2" height="2" fill="#ffc04f"/><rect x="4" y="10" width="2" height="2" fill="#6e5634"/><rect x="6" y="10" width="2" height="2" fill="#c4690c"/><rect x="8" y="10" width="2" height="2" fill="#f39a26"/><rect x="10" y="10" width="2" height="2" fill="#fbd98a"/><rect x="12" y="10" width="2" height="2" fill="#f39a26"/><rect x="14" y="10" width="2" height="2" fill="#c4690c"/><rect x="0" y="12" width="2" height="2" fill="#6e5634"/><rect x="2" y="12" width="2" height="2" fill="#f39a26"/><rect x="4" y="12" width="2" height="2" fill="#6e5634"/><rect x="8" y="12" width="2" height="2" fill="#c4690c"/><rect x="10" y="12" width="2" height="2" fill="#f39a26"/><rect x="12" y="12" width="2" height="2" fill="#fbd98a"/><rect x="14" y="12" width="2" height="2" fill="#f39a26"/><rect x="16" y="12" width="2" height="2" fill="#c4690c"/><rect x="18" y="12" width="2" height="2" fill="#c4690c"/><rect x="20" y="12" width="2" height="2" fill="#c4690c"/><rect x="2" y="14" width="2" height="2" fill="#c4690c"/><rect x="10" y="14" width="2" height="2" fill="#c4690c"/><rect x="12" y="14" width="2" height="2" fill="#f39a26"/><rect x="14" y="14" width="2" height="2" fill="#fbd98a"/><rect x="16" y="14" width="2" height="2" fill="#fbd98a"/><rect x="18" y="14" width="2" height="2" fill="#fbd98a"/><rect x="20" y="14" width="2" height="2" fill="#f39a26"/><rect x="22" y="14" width="2" height="2" fill="#c4690c"/><rect x="12" y="16" width="2" height="2" fill="#7a4406"/><rect x="14" y="16" width="2" height="2" fill="#f39a26"/><rect x="16" y="16" width="2" height="2" fill="#f39a26"/><rect x="18" y="16" width="2" height="2" fill="#f39a26"/><rect x="20" y="16" width="2" height="2" fill="#f39a26"/><rect x="22" y="16" width="2" height="2" fill="#c4690c"/><rect x="14" y="18" width="2" height="2" fill="#7a4406"/><rect x="16" y="18" width="2" height="2" fill="#7a4406"/><rect x="18" y="18" width="2" height="2" fill="#7a4406"/><rect x="20" y="18" width="2" height="2" fill="#7a4406"/></svg>
<span class="t" style="left:171.37px;top:931.57px;font-size:27px;font-weight:bold;color:#000;transform:scaleX(1.0752);">key</span>
<span class="t" style="left:219.85px;top:931.57px;font-size:27px;font-weight:bold;color:#000;transform:scaleX(1.0398);">Context</span>
<span class="t" style="left:331.68px;top:931.57px;font-size:27px;font-weight:normal;color:#000;transform:scaleX(1.1670);">of</span>
<svg style="left:368px;top:932px" width="28" height="28" viewBox="0 0 28 28"><rect x="1" y="1" width="26" height="26" rx="1.6" fill="#fff" stroke="#8e8e8e" stroke-width="2"/><rect x="7.8" y="5.8" width="12.4" height="14.4" rx="5.2" ry="6" fill="none" stroke="#ff8000" stroke-width="3.6"/></svg>
<span class="t" style="left:407.79px;top:931.57px;font-size:27px;font-weight:normal;color:#000;transform:scaleX(1.0680);">org</span>
<span class="t" style="left:449.64px;top:931.57px;font-size:27px;font-weight:normal;color:#000;transform:scaleX(0.9981);">.apache</span>
<span class="t" style="left:545.07px;top:931.57px;font-size:27px;font-weight:normal;color:#000;transform:scaleX(1.1870);">.flink</span>
<span class="t" style="left:611.21px;top:931.57px;font-size:27px;font-weight:normal;color:#000;transform:scaleX(1.0899);">.runtime</span>
<span class="t" style="left:717.59px;top:931.57px;font-size:27px;font-weight:normal;color:#000;transform:scaleX(1.0600);">.state</span>
<span class="t" style="left:787.73px;top:931.57px;font-size:27px;font-weight:normal;color:#000;transform:scaleX(1.0035);">.heap</span>
<span class="t" style="left:855.51px;top:931.57px;font-size:27px;font-weight:normal;color:#000;transform:scaleX(1.0096);">.CopyOnWriteStateTable</span>
<span class="t" style="left:1986.82px;top:931.57px;font-size:27px;font-weight:normal;color:#000;transform:scaleX(1.0600);">4,352</span>
<span class="t" style="left:2262.00px;top:931.57px;font-size:27px;font-weight:normal;color:#000;transform:scaleX(1.0600);">64</span>
<div style="left:24px;top:966px;width:2296px;height:40px;background:#f2f2f2"></div>
<svg style="left:99px;top:977px" width="15" height="18" viewBox="0 0 15 18"><path d="M0 0L14.6 9L0 18z" fill="#8c8c8c"/></svg>
<svg style="left:134px;top:976px" width="24" height="20" viewBox="0 0 24 20" shape-rendering="crispEdges"><rect x="2" y="0" width="2" height="2" fill="#6e5634"/><rect x="4" y="0" width="2" height="2" fill="#6e5634"/><rect x="6" y="0" width="2" height="2" fill="#6e5634"/><rect x="8" y="0" width="2" height="2" fill="#6e5634"/><rect x="10" y="0" width="2" height="2" fill="#6e5634"/><rect x="12" y="0" width="2" height="2" fill="#6e5634"/><rect x="0" y="2" width="2" height="2" fill="#6e5634"/><rect x="2" y="2" width="2" height="2" fill="#ffc04f"/><rect x="4" y="2" width="2" height="2" fill="#ffc04f"/><rect x="6" y="2" width="2" height="2" fill="#ffc04f"/><rect x="8" y="2" width="2" height="2" fill="#ffc04f"/><rect x="10" y="2" width="2" height="2" fill="#ffc04f"/><rect x="12" y="2" width="2" height="2" fill="#f39a26"/><rect x="14" y="2" width="2" height="2" fill="#c4690c"/><rect x="0" y="4" width="2" height="2" fill="#6e5634"/><rect x="2" y="4" width="2" height="2" fill="#ffc04f"/><rect x="4" y="4" width="2" height="2" fill="#fbd98a"/><rect x="6" y="4" width="2" height="2" fill="#c4690c"/><rect x="8" y="4" width="2" height="2" fill="#c4690c"/><rect x="10" y="4" width="2" height="2" fill="#6e5634"/><rect x="12" y="4" width="2" height="2" fill="#6e5634"/><rect x="0" y="6" width="2" height="2" fill="#6e5634"/><rect x="2" y="6" width="2" height="2" fill="#ffc04f"/><rect x="4" y="6" width="2" height="2" fill="#c4690c"/><rect x="6" y="6" width="2" height="2" fill="#fbd98a"/><rect x="8" y="6" width="2" height="2" fill="#f39a26"/><rect x="10" y="6" width="2" height="2" fill="#c4690c"/><rect x="0" y="8" width="2" height="2" fill="#6e5634"/><rect x="2" y="8" width="2" height="2" fill="#ffc04f"/><rect x="4" y="8" width="2" height="2" fill="#c4690c"/><rect x="6" y="8" width="2" height="2" fill="#f39a26"/><rect x="8" y="8" width="2" height="2" fill="#fbd98a"/><rect x="10" y="8" width="2" height="2" fill="#f39a26"/><rect x="12" y="8" width="2" height="2" fill="#c4690c"/><rect x="0" y="10" width="2" height="2" fill="#6e5634"/><rect x="2" y="10" width="2" height="2" fill="#ffc04f"/><rect x="4" y="10" width="2" height="2" fill="#6e5634"/><rect x="6" y="10" width="2" height="2" fill="#c4690c"/><rect x="8" y="10" width="2" height="2" fill="#f39a26"/><rect x="10" y="10" width="2" height="2" fill="#fbd98a"/><rect x="12" y="10" width="2" height="2" fill="#f39a26"/><rect x="14" y="10" width="2" height="2" fill="#c4690c"/><rect x="0" y="12" width="2" height="2" fill="#6e5634"/><rect x="2" y="12" width="2" height="2" fill="#f39a26"/><rect x="4" y="12" width="2" height="2" fill="#6e5634"/><rect x="8" y="12" width="2" height="2" fill="#c4690c"/><rect x="10" y="12" width="2" height="2" fill="#f39a26"/><rect x="12" y="12" width="2" height="2" fill="#fbd98a"/><rect x="14" y="12" width="2" height="2" fill="#f39a26"/><rect x="16" y="12" width="2" height="2" fill="#c4690c"/><rect x="18" y="12" width="2" height="2" fill="#c4690c"/><rect x="20" y="12" width="2" height="2" fill="#c4690c"/><rect x="2" y="14" width="2" height="2" fill="#c4690c"/><rect x="10" y="14" width="2" height="2" fill="#c4690c"/><rect x="12" y="14" width="2" height="2" fill="#f39a26"/><rect x="14" y="14" width="2" height="2" fill="#fbd98a"/><rect x="16" y="14" width="2" height="2" fill="#fbd98a"/><rect x="18" y="14" width="2" height="2" fill="#fbd98a"/><rect x="20" y="14" width="2" height="2" fill="#f39a26"/><rect x="22" y="14" width="2" height="2" fill="#c4690c"/><rect x="12" y="16" width="2" height="2" fill="#7a4406"/><rect x="14" y="16" width="2" height="2" fill="#f39a26"/><rect x="16" y="16" width="2" height="2" fill="#f39a26"/><rect x="18" y="16" width="2" height="2" fill="#f39a26"/><rect x="20" y="16" width="2" height="2" fill="#f39a26"/><rect x="22" y="16" width="2" height="2" fill="#c4690c"/><rect x="14" y="18" width="2" height="2" fill="#7a4406"/><rect x="16" y="18" width="2" height="2" fill="#7a4406"/><rect x="18" y="18" width="2" height="2" fill="#7a4406"/><rect x="20" y="18" width="2" height="2" fill="#7a4406"/></svg>
<span class="t" style="left:171.37px;top:971.57px;font-size:27px;font-weight:bold;color:#000;transform:scaleX(1.0752);">key</span>
<span class="t" style="left:219.85px;top:971.57px;font-size:27px;font-weight:bold;color:#000;transform:scaleX(1.0398);">Context</span>
<span class="t" style="left:331.68px;top:971.57px;font-size:27px;font-weight:normal;color:#000;transform:scaleX(1.1670);">of</span>
<svg style="left:368px;top:972px" width="28" height="28" viewBox="0 0 28 28"><rect x="1" y="1" width="26" height="26" rx="1.6" fill="#fff" stroke="#8e8e8e" stroke-width="2"/><rect x="7.8" y="5.8" width="12.4" height="14.4" rx="5.2" ry="6" fill="none" stroke="#ff8000" stroke-width="3.6"/></svg>
<span class="t" style="left:407.79px;top:971.57px;font-size:27px;font-weight:normal;color:#000;transform:scaleX(1.0680);">org</span>
<span class="t" style="left:449.64px;top:971.57px;font-size:27px;font-weight:normal;color:#000;transform:scaleX(0.9981);">.apache</span>
<span class="t" style="left:545.07px;top:971.57px;font-size:27px;font-weight:normal;color:#000;transform:scaleX(1.1870);">.flink</span>
<span class="t" style="left:611.21px;top:971.57px;font-size:27px;font-weight:normal;color:#000;transform:scaleX(1.0899);">.runtime</span>
<span class="t" style="left:717.59px;top:971.57px;font-size:27px;font-weight:normal;color:#000;transform:scaleX(1.0600);">.state</span>
<span class="t" style="left:787.73px;top:971.57px;font-size:27px;font-weight:normal;color:#000;transform:scaleX(1.0035);">.heap</span>
<span class="t" style="left:855.51px;top:971.57px;font-size:27px;font-weight:normal;color:#000;transform:scaleX(1.0096);">.CopyOnWriteStateTable</span>
<span class="t" style="left:1986.82px;top:971.57px;font-size:27px;font-weight:normal;color:#000;transform:scaleX(1.0600);">4,352</span>
<span class="t" style="left:2262.00px;top:971.57px;font-size:27px;font-weight:normal;color:#000;transform:scaleX(1.0600);">64</span>
<svg style="left:99px;top:1017px" width="15" height="18" viewBox="0 0 15 18"><path d="M0 0L14.6 9L0 18z" fill="#8c8c8c"/></svg>
<svg style="left:134px;top:1016px" width="24" height="20" viewBox="0 0 24 20" shape-rendering="crispEdges"><rect x="2" y="0" width="2" height="2" fill="#6e5634"/><rect x="4" y="0" width="2" height="2" fill="#6e5634"/><rect x="6" y="0" width="2" height="2" fill="#6e5634"/><rect x="8" y="0" width="2" height="2" fill="#6e5634"/><rect x="10" y="0" width="2" height="2" fill="#6e5634"/><rect x="12" y="0" width="2" height="2" fill="#6e5634"/><rect x="0" y="2" width="2" height="2" fill="#6e5634"/><rect x="2" y="2" width="2" height="2" fill="#ffc04f"/><rect x="4" y="2" width="2" height="2" fill="#ffc04f"/><rect x="6" y="2" width="2" height="2" fill="#ffc04f"/><rect x="8" y="2" width="2" height="2" fill="#ffc04f"/><rect x="10" y="2" width="2" height="2" fill="#ffc04f"/><rect x="12" y="2" width="2" height="2" fill="#f39a26"/><rect x="14" y="2" width="2" height="2" fill="#c4690c"/><rect x="0" y="4" width="2" height="2" fill="#6e5634"/><rect x="2" y="4" width="2" height="2" fill="#ffc04f"/><rect x="4" y="4" width="2" height="2" fill="#fbd98a"/><rect x="6" y="4" width="2" height="2" fill="#c4690c"/><rect x="8" y="4" width="2" height="2" fill="#c4690c"/><rect x="10" y="4" width="2" height="2" fill="#6e5634"/><rect x="12" y="4" width="2" height="2" fill="#6e5634"/><rect x="0" y="6" width="2" height="2" fill="#6e5634"/><rect x="2" y="6" width="2" height="2" fill="#ffc04f"/><rect x="4" y="6" width="2" height="2" fill="#c4690c"/><rect x="6" y="6" width="2" height="2" fill="#fbd98a"/><rect x="8" y="6" width="2" height="2" fill="#f39a26"/><rect x="10" y="6" width="2" height="2" fill="#c4690c"/><rect x="0" y="8" width="2" height="2" fill="#6e5634"/><rect x="2" y="8" width="2" height="2" fill="#ffc04f"/><rect x="4" y="8" width="2" height="2" fill="#c4690c"/><rect x="6" y="8" width="2" height="2" fill="#f39a26"/><rect x="8" y="8" width="2" height="2" fill="#fbd98a"/><rect x="10" y="8" width="2" height="2" fill="#f39a26"/><rect x="12" y="8" width="2" height="2" fill="#c4690c"/><rect x="0" y="10" width="2" height="2" fill="#6e5634"/><rect x="2" y="10" width="2" height="2" fill="#ffc04f"/><rect x="4" y="10" width="2" height="2" fill="#6e5634"/><rect x="6" y="10" width="2" height="2" fill="#c4690c"/><rect x="8" y="10" width="2" height="2" fill="#f39a26"/><rect x="10" y="10" width="2" height="2" fill="#fbd98a"/><rect x="12" y="10" width="2" height="2" fill="#f39a26"/><rect x="14" y="10" width="2" height="2" fill="#c4690c"/><rect x="0" y="12" width="2" height="2" fill="#6e5634"/><rect x="2" y="12" width="2" height="2" fill="#f39a26"/><rect x="4" y="12" width="2" height="2" fill="#6e5634"/><rect x="8" y="12" width="2" height="2" fill="#c4690c"/><rect x="10" y="12" width="2" height="2" fill="#f39a26"/><rect x="12" y="12" width="2" height="2" fill="#fbd98a"/><rect x="14" y="12" width="2" height="2" fill="#f39a26"/><rect x="16" y="12" width="2" height="2" fill="#c4690c"/><rect x="18" y="12" width="2" height="2" fill="#c4690c"/><rect x="20" y="12" width="2" height="2" fill="#c4690c"/><rect x="2" y="14" width="2" height="2" fill="#c4690c"/><rect x="10" y="14" width="2" height="2" fill="#c4690c"/><rect x="12" y="14" width="2" height="2" fill="#f39a26"/><rect x="14" y="14" width="2" height="2" fill="#fbd98a"/><rect x="16" y="14" width="2" height="2" fill="#fbd98a"/><rect x="18" y="14" width="2" height="2" fill="#fbd98a"/><rect x="20" y="14" width="2" height="2" fill="#f39a26"/><rect x="22" y="14" width="2" height="2" fill="#c4690c"/><rect x="12" y="16" width="2" height="2" fill="#7a4406"/><rect x="14" y="16" width="2" height="2" fill="#f39a26"/><rect x="16" y="16" width="2" height="2" fill="#f39a26"/><rect x="18" y="16" width="2" height="2" fill="#f39a26"/><rect x="20" y="16" width="2" height="2" fill="#f39a26"/><rect x="22" y="16" width="2" height="2" fill="#c4690c"/><rect x="14" y="18" width="2" height="2" fill="#7a4406"/><rect x="16" y="18" width="2" height="2" fill="#7a4406"/><rect x="18" y="18" width="2" height="2" fill="#7a4406"/><rect x="20" y="18" width="2" height="2" fill="#7a4406"/></svg>
<span class="t" style="left:172.91px;top:1011.57px;font-size:27px;font-weight:bold;color:#000;transform:scaleX(1.0677);">flink</span>
<span class="t" style="left:232.22px;top:1011.57px;font-size:27px;font-weight:bold;color:#000;transform:scaleX(1.0007);">State</span>
<span class="t" style="left:298.28px;top:1011.57px;font-size:27px;font-weight:bold;color:#000;transform:scaleX(1.0049);">Backend</span>
<span class="t" style="left:419.70px;top:1011.57px;font-size:27px;font-weight:normal;color:#000;transform:scaleX(1.1483);">of</span>
<svg style="left:456px;top:1012px" width="28" height="28" viewBox="0 0 28 28"><rect x="1" y="1" width="26" height="26" rx="1.6" fill="#fff" stroke="#8e8e8e" stroke-width="2"/><rect x="7.8" y="5.8" width="12.4" height="14.4" rx="5.2" ry="6" fill="none" stroke="#ff8000" stroke-width="3.6"/></svg>
<span class="t" style="left:495.79px;top:1011.57px;font-size:27px;font-weight:normal;color:#000;transform:scaleX(1.0655);">org</span>
<span class="t" style="left:537.54px;top:1011.57px;font-size:27px;font-weight:normal;color:#000;transform:scaleX(0.9971);">.apache</span>
<span class="t" style="left:633.34px;top:1011.57px;font-size:27px;font-weight:normal;color:#000;transform:scaleX(0.9995);">.beam</span>
<span class="t" style="left:708.18px;top:1011.57px;font-size:27px;font-weight:normal;color:#000;transform:scaleX(1.0611);">.runners</span>
<span class="t" style="left:812.95px;top:1011.57px;font-size:27px;font-weight:normal;color:#000;transform:scaleX(1.1960);">.flink</span>
<span class="t" style="left:879.62px;top:1011.57px;font-size:27px;font-weight:normal;color:#000;transform:scaleX(1.0880);">.translation</span>
<span class="t" style="left:1023.47px;top:1011.57px;font-size:27px;font-weight:normal;color:#000;transform:scaleX(1.0258);">.wrappers</span>
<span class="t" style="left:1144.97px;top:1011.57px;font-size:27px;font-weight:normal;color:#000;transform:scaleX(1.0671);">.streaming</span>
<span class="t" style="left:1279.49px;top:1011.57px;font-size:27px;font-weight:normal;color:#000;transform:scaleX(1.0600);">.state</span>
<span class="t" style="left:1349.53px;top:1011.57px;font-size:27px;font-weight:normal;color:#000;transform:scaleX(1.0423);">.FlinkStateInternals</span>
<span class="t" style="left:2010.69px;top:1011.57px;font-size:27px;font-weight:normal;color:#000;transform:scaleX(1.0600);">912</span>
<span class="t" style="left:2262.61px;top:1011.57px;font-size:27px;font-weight:normal;color:#000;transform:scaleX(1.0600);">32</span>
<div style="left:24px;top:1046px;width:2296px;height:40px;background:#f2f2f2"></div>
<svg style="left:99px;top:1057px" width="15" height="18" viewBox="0 0 15 18"><path d="M0 0L14.6 9L0 18z" fill="#8c8c8c"/></svg>
<svg style="left:134px;top:1056px" width="24" height="20" viewBox="0 0 24 20" shape-rendering="crispEdges"><rect x="2" y="0" width="2" height="2" fill="#6e5634"/><rect x="4" y="0" width="2" height="2" fill="#6e5634"/><rect x="6" y="0" width="2" height="2" fill="#6e5634"/><rect x="8" y="0" width="2" height="2" fill="#6e5634"/><rect x="10" y="0" width="2" height="2" fill="#6e5634"/><rect x="12" y="0" width="2" height="2" fill="#6e5634"/><rect x="0" y="2" width="2" height="2" fill="#6e5634"/><rect x="2" y="2" width="2" height="2" fill="#ffc04f"/><rect x="4" y="2" width="2" height="2" fill="#ffc04f"/><rect x="6" y="2" width="2" height="2" fill="#ffc04f"/><rect x="8" y="2" width="2" height="2" fill="#ffc04f"/><rect x="10" y="2" width="2" height="2" fill="#ffc04f"/><rect x="12" y="2" width="2" height="2" fill="#f39a26"/><rect x="14" y="2" width="2" height="2" fill="#c4690c"/><rect x="0" y="4" width="2" height="2" fill="#6e5634"/><rect x="2" y="4" width="2" height="2" fill="#ffc04f"/><rect x="4" y="4" width="2" height="2" fill="#fbd98a"/><rect x="6" y="4" width="2" height="2" fill="#c4690c"/><rect x="8" y="4" width="2" height="2" fill="#c4690c"/><rect x="10" y="4" width="2" height="2" fill="#6e5634"/><rect x="12" y="4" width="2" height="2" fill="#6e5634"/><rect x="0" y="6" width="2" height="2" fill="#6e5634"/><rect x="2" y="6" width="2" height="2" fill="#ffc04f"/><rect x="4" y="6" width="2" height="2" fill="#c4690c"/><rect x="6" y="6" width="2" height="2" fill="#fbd98a"/><rect x="8" y="6" width="2" height="2" fill="#f39a26"/><rect x="10" y="6" width="2" height="2" fill="#c4690c"/><rect x="0" y="8" width="2" height="2" fill="#6e5634"/><rect x="2" y="8" width="2" height="2" fill="#ffc04f"/><rect x="4" y="8" width="2" height="2" fill="#c4690c"/><rect x="6" y="8" width="2" height="2" fill="#f39a26"/><rect x="8" y="8" width="2" height="2" fill="#fbd98a"/><rect x="10" y="8" width="2" height="2" fill="#f39a26"/><rect x="12" y="8" width="2" height="2" fill="#c4690c"/><rect x="0" y="10" width="2" height="2" fill="#6e5634"/><rect x="2" y="10" width="2" height="2" fill="#ffc04f"/><rect x="4" y="10" width="2" height="2" fill="#6e5634"/><rect x="6" y="10" width="2" height="2" fill="#c4690c"/><rect x="8" y="10" width="2" height="2" fill="#f39a26"/><rect x="10" y="10" width="2" height="2" fill="#fbd98a"/><rect x="12" y="10" width="2" height="2" fill="#f39a26"/><rect x="14" y="10" width="2" height="2" fill="#c4690c"/><rect x="0" y="12" width="2" height="2" fill="#6e5634"/><rect x="2" y="12" width="2" height="2" fill="#f39a26"/><rect x="4" y="12" width="2" height="2" fill="#6e5634"/><rect x="8" y="12" width="2" height="2" fill="#c4690c"/><rect x="10" y="12" width="2" height="2" fill="#f39a26"/><rect x="12" y="12" width="2" height="2" fill="#fbd98a"/><rect x="14" y="12" width="2" height="2" fill="#f39a26"/><rect x="16" y="12" width="2" height="2" fill="#c4690c"/><rect x="18" y="12" width="2" height="2" fill="#c4690c"/><rect x="20" y="12" width="2" height="2" fill="#c4690c"/><rect x="2" y="14" width="2" height="2" fill="#c4690c"/><rect x="10" y="14" width="2" height="2" fill="#c4690c"/><rect x="12" y="14" width="2" height="2" fill="#f39a26"/><rect x="14" y="14" width="2" height="2" fill="#fbd98a"/><rect x="16" y="14" width="2" height="2" fill="#fbd98a"/><rect x="18" y="14" width="2" height="2" fill="#fbd98a"/><rect x="20" y="14" width="2" height="2" fill="#f39a26"/><rect x="22" y="14" width="2" height="2" fill="#c4690c"/><rect x="12" y="16" width="2" height="2" fill="#7a4406"/><rect x="14" y="16" width="2" height="2" fill="#f39a26"/><rect x="16" y="16" width="2" height="2" fill="#f39a26"/><rect x="18" y="16" width="2" height="2" fill="#f39a26"/><rect x="20" y="16" width="2" height="2" fill="#f39a26"/><rect x="22" y="16" width="2" height="2" fill="#c4690c"/><rect x="14" y="18" width="2" height="2" fill="#7a4406"/><rect x="16" y="18" width="2" height="2" fill="#7a4406"/><rect x="18" y="18" width="2" height="2" fill="#7a4406"/><rect x="20" y="18" width="2" height="2" fill="#7a4406"/></svg>
<span class="t" style="left:171.48px;top:1051.57px;font-size:27px;font-weight:bold;color:#000;transform:scaleX(1.0786);">priority</span>
<span class="t" style="left:271.81px;top:1051.57px;font-size:27px;font-weight:bold;color:#000;transform:scaleX(1.0718);">Queue</span>
<span class="t" style="left:361.96px;top:1051.57px;font-size:27px;font-weight:bold;color:#000;transform:scaleX(0.9548);">Set</span>
<span class="t" style="left:402.02px;top:1051.57px;font-size:27px;font-weight:bold;color:#000;transform:scaleX(0.9856);">Factory</span>
<span class="t" style="left:507.73px;top:1051.57px;font-size:27px;font-weight:normal;color:#000;transform:scaleX(1.1203);">of</span>
<svg style="left:544px;top:1052px" width="28" height="28" viewBox="0 0 28 28"><rect x="1" y="1" width="26" height="26" rx="1.6" fill="#fff" stroke="#8e8e8e" stroke-width="2"/><rect x="7.8" y="5.8" width="12.4" height="14.4" rx="5.2" ry="6" fill="none" stroke="#ff8000" stroke-width="3.6"/></svg>
<span class="t" style="left:583.09px;top:1051.57px;font-size:27px;font-weight:normal;color:#000;transform:scaleX(1.0680);">org</span>
<span class="t" style="left:624.94px;top:1051.57px;font-size:27px;font-weight:normal;color:#000;transform:scaleX(0.9981);">.apache</span>
<span class="t" style="left:720.37px;top:1051.57px;font-size:27px;font-weight:normal;color:#000;transform:scaleX(1.1870);">.flink</span>
<span class="t" style="left:786.56px;top:1051.57px;font-size:27px;font-weight:normal;color:#000;transform:scaleX(1.0702);">.streaming</span>
<span class="t" style="left:921.51px;top:1051.57px;font-size:27px;font-weight:normal;color:#000;transform:scaleX(1.0521);">.api</span>
<span class="t" style="left:967.31px;top:1051.57px;font-size:27px;font-weight:normal;color:#000;transform:scaleX(1.0521);">.operators</span>
<span class="t" style="left:1095.29px;top:1051.57px;font-size:27px;font-weight:normal;color:#000;transform:scaleX(1.0195);">.InternalTimeServiceManager</span>
<span class="t" style="left:2010.51px;top:1051.57px;font-size:27px;font-weight:normal;color:#000;transform:scaleX(1.0600);">216</span>
<span class="t" style="left:2262.28px;top:1051.57px;font-size:27px;font-weight:normal;color:#000;transform:scaleX(1.0600);">40</span>
<svg style="left:99px;top:1097px" width="15" height="18" viewBox="0 0 15 18"><path d="M0 0L14.6 9L0 18z" fill="#8c8c8c"/></svg>
<svg style="left:134px;top:1096px" width="24" height="20" viewBox="0 0 24 20" shape-rendering="crispEdges"><rect x="2" y="0" width="2" height="2" fill="#6e5634"/><rect x="4" y="0" width="2" height="2" fill="#6e5634"/><rect x="6" y="0" width="2" height="2" fill="#6e5634"/><rect x="8" y="0" width="2" height="2" fill="#6e5634"/><rect x="10" y="0" width="2" height="2" fill="#6e5634"/><rect x="12" y="0" width="2" height="2" fill="#6e5634"/><rect x="0" y="2" width="2" height="2" fill="#6e5634"/><rect x="2" y="2" width="2" height="2" fill="#ffc04f"/><rect x="4" y="2" width="2" height="2" fill="#ffc04f"/><rect x="6" y="2" width="2" height="2" fill="#ffc04f"/><rect x="8" y="2" width="2" height="2" fill="#ffc04f"/><rect x="10" y="2" width="2" height="2" fill="#ffc04f"/><rect x="12" y="2" width="2" height="2" fill="#f39a26"/><rect x="14" y="2" width="2" height="2" fill="#c4690c"/><rect x="0" y="4" width="2" height="2" fill="#6e5634"/><rect x="2" y="4" width="2" height="2" fill="#ffc04f"/><rect x="4" y="4" width="2" height="2" fill="#fbd98a"/><rect x="6" y="4" width="2" height="2" fill="#c4690c"/><rect x="8" y="4" width="2" height="2" fill="#c4690c"/><rect x="10" y="4" width="2" height="2" fill="#6e5634"/><rect x="12" y="4" width="2" height="2" fill="#6e5634"/><rect x="0" y="6" width="2" height="2" fill="#6e5634"/><rect x="2" y="6" width="2" height="2" fill="#ffc04f"/><rect x="4" y="6" width="2" height="2" fill="#c4690c"/><rect x="6" y="6" width="2" height="2" fill="#fbd98a"/><rect x="8" y="6" width="2" height="2" fill="#f39a26"/><rect x="10" y="6" width="2" height="2" fill="#c4690c"/><rect x="0" y="8" width="2" height="2" fill="#6e5634"/><rect x="2" y="8" width="2" height="2" fill="#ffc04f"/><rect x="4" y="8" width="2" height="2" fill="#c4690c"/><rect x="6" y="8" width="2" height="2" fill="#f39a26"/><rect x="8" y="8" width="2" height="2" fill="#fbd98a"/><rect x="10" y="8" width="2" height="2" fill="#f39a26"/><rect x="12" y="8" width="2" height="2" fill="#c4690c"/><rect x="0" y="10" width="2" height="2" fill="#6e5634"/><rect x="2" y="10" width="2" height="2" fill="#ffc04f"/><rect x="4" y="10" width="2" height="2" fill="#6e5634"/><rect x="6" y="10" width="2" height="2" fill="#c4690c"/><rect x="8" y="10" width="2" height="2" fill="#f39a26"/><rect x="10" y="10" width="2" height="2" fill="#fbd98a"/><rect x="12" y="10" width="2" height="2" fill="#f39a26"/><rect x="14" y="10" width="2" height="2" fill="#c4690c"/><rect x="0" y="12" width="2" height="2" fill="#6e5634"/><rect x="2" y="12" width="2" height="2" fill="#f39a26"/><rect x="4" y="12" width="2" height="2" fill="#6e5634"/><rect x="8" y="12" width="2" height="2" fill="#c4690c"/><rect x="10" y="12" width="2" height="2" fill="#f39a26"/><rect x="12" y="12" width="2" height="2" fill="#fbd98a"/><rect x="14" y="12" width="2" height="2" fill="#f39a26"/><rect x="16" y="12" width="2" height="2" fill="#c4690c"/><rect x="18" y="12" width="2" height="2" fill="#c4690c"/><rect x="20" y="12" width="2" height="2" fill="#c4690c"/><rect x="2" y="14" width="2" height="2" fill="#c4690c"/><rect x="10" y="14" width="2" height="2" fill="#c4690c"/><rect x="12" y="14" width="2" height="2" fill="#f39a26"/><rect x="14" y="14" width="2" height="2" fill="#fbd98a"/><rect x="16" y="14" width="2" height="2" fill="#fbd98a"/><rect x="18" y="14" width="2" height="2" fill="#fbd98a"/><rect x="20" y="14" width="2" height="2" fill="#f39a26"/><rect x="22" y="14" width="2" height="2" fill="#c4690c"/><rect x="12" y="16" width="2" height="2" fill="#7a4406"/><rect x="14" y="16" width="2" height="2" fill="#f39a26"/><rect x="16" y="16" width="2" height="2" fill="#f39a26"/><rect x="18" y="16" width="2" height="2" fill="#f39a26"/><rect x="20" y="16" width="2" height="2" fill="#f39a26"/><rect x="22" y="16" width="2" height="2" fill="#c4690c"/><rect x="14" y="18" width="2" height="2" fill="#7a4406"/><rect x="16" y="18" width="2" height="2" fill="#7a4406"/><rect x="18" y="18" width="2" height="2" fill="#7a4406"/><rect x="20" y="18" width="2" height="2" fill="#7a4406"/></svg>
<span class="t" style="left:171.52px;top:1091.57px;font-size:27px;font-weight:bold;color:#000;transform:scaleX(1.0558);">backend</span>
<span class="t" style="left:295.29px;top:1091.57px;font-size:27px;font-weight:normal;color:#000;transform:scaleX(1.1529);">of</span>
<svg style="left:332px;top:1092px" width="28" height="28" viewBox="0 0 28 28"><rect x="1" y="1" width="26" height="26" rx="1.6" fill="#fff" stroke="#8e8e8e" stroke-width="2"/><rect x="7.8" y="5.8" width="12.4" height="14.4" rx="5.2" ry="6" fill="none" stroke="#ff8000" stroke-width="3.6"/></svg>
<span class="t" style="left:371.49px;top:1091.57px;font-size:27px;font-weight:normal;color:#000;transform:scaleX(1.0655);">org</span>
<span class="t" style="left:413.24px;top:1091.57px;font-size:27px;font-weight:normal;color:#000;transform:scaleX(0.9971);">.apache</span>
<span class="t" style="left:509.04px;top:1091.57px;font-size:27px;font-weight:normal;color:#000;transform:scaleX(0.9995);">.beam</span>
<span class="t" style="left:583.88px;top:1091.57px;font-size:27px;font-weight:normal;color:#000;transform:scaleX(1.0611);">.runners</span>
<span class="t" style="left:688.65px;top:1091.57px;font-size:27px;font-weight:normal;color:#000;transform:scaleX(1.1960);">.flink</span>
<span class="t" style="left:755.32px;top:1091.57px;font-size:27px;font-weight:normal;color:#000;transform:scaleX(1.0880);">.translation</span>
<span class="t" style="left:899.17px;top:1091.57px;font-size:27px;font-weight:normal;color:#000;transform:scaleX(1.0258);">.wrappers</span>
<span class="t" style="left:1020.67px;top:1091.57px;font-size:27px;font-weight:normal;color:#000;transform:scaleX(1.0671);">.streaming</span>
<span class="t" style="left:1155.33px;top:1091.57px;font-size:27px;font-weight:normal;color:#000;transform:scaleX(1.0001);">.KeyedPushedBackElementsHandler</span>
<span class="t" style="left:2026.41px;top:1091.57px;font-size:27px;font-weight:normal;color:#000;transform:scaleX(1.0600);">48</span>
<span class="t" style="left:2262.61px;top:1091.57px;font-size:27px;font-weight:normal;color:#000;transform:scaleX(1.0600);">32</span>
<div style="left:24px;top:1126px;width:2296px;height:40px;background:#f2f2f2"></div>
<svg style="left:99px;top:1137px" width="15" height="18" viewBox="0 0 15 18"><path d="M0 0L14.6 9L0 18z" fill="#8c8c8c"/></svg>
<svg style="left:134px;top:1136px" width="24" height="20" viewBox="0 0 24 20" shape-rendering="crispEdges"><rect x="2" y="0" width="2" height="2" fill="#6e5634"/><rect x="4" y="0" width="2" height="2" fill="#6e5634"/><rect x="6" y="0" width="2" height="2" fill="#6e5634"/><rect x="8" y="0" width="2" height="2" fill="#6e5634"/><rect x="10" y="0" width="2" height="2" fill="#6e5634"/><rect x="12" y="0" width="2" height="2" fill="#6e5634"/><rect x="0" y="2" width="2" height="2" fill="#6e5634"/><rect x="2" y="2" width="2" height="2" fill="#ffc04f"/><rect x="4" y="2" width="2" height="2" fill="#ffc04f"/><rect x="6" y="2" width="2" height="2" fill="#ffc04f"/><rect x="8" y="2" width="2" height="2" fill="#ffc04f"/><rect x="10" y="2" width="2" height="2" fill="#ffc04f"/><rect x="12" y="2" width="2" height="2" fill="#f39a26"/><rect x="14" y="2" width="2" height="2" fill="#c4690c"/><rect x="0" y="4" width="2" height="2" fill="#6e5634"/><rect x="2" y="4" width="2" height="2" fill="#ffc04f"/><rect x="4" y="4" width="2" height="2" fill="#fbd98a"/><rect x="6" y="4" width="2" height="2" fill="#c4690c"/><rect x="8" y="4" width="2" height="2" fill="#c4690c"/><rect x="10" y="4" width="2" height="2" fill="#6e5634"/><rect x="12" y="4" width="2" height="2" fill="#6e5634"/><rect x="0" y="6" width="2" height="2" fill="#6e5634"/><rect x="2" y="6" width="2" height="2" fill="#ffc04f"/><rect x="4" y="6" width="2" height="2" fill="#c4690c"/><rect x="6" y="6" width="2" height="2" fill="#fbd98a"/><rect x="8" y="6" width="2" height="2" fill="#f39a26"/><rect x="10" y="6" width="2" height="2" fill="#c4690c"/><rect x="0" y="8" width="2" height="2" fill="#6e5634"/><rect x="2" y="8" width="2" height="2" fill="#ffc04f"/><rect x="4" y="8" width="2" height="2" fill="#c4690c"/><rect x="6" y="8" width="2" height="2" fill="#f39a26"/><rect x="8" y="8" width="2" height="2" fill="#fbd98a"/><rect x="10" y="8" width="2" height="2" fill="#f39a26"/><rect x="12" y="8" width="2" height="2" fill="#c4690c"/><rect x="0" y="10" width="2" height="2" fill="#6e5634"/><rect x="2" y="10" width="2" height="2" fill="#ffc04f"/><rect x="4" y="10" width="2" height="2" fill="#6e5634"/><rect x="6" y="10" width="2" height="2" fill="#c4690c"/><rect x="8" y="10" width="2" height="2" fill="#f39a26"/><rect x="10" y="10" width="2" height="2" fill="#fbd98a"/><rect x="12" y="10" width="2" height="2" fill="#f39a26"/><rect x="14" y="10" width="2" height="2" fill="#c4690c"/><rect x="0" y="12" width="2" height="2" fill="#6e5634"/><rect x="2" y="12" width="2" height="2" fill="#f39a26"/><rect x="4" y="12" width="2" height="2" fill="#6e5634"/><rect x="8" y="12" width="2" height="2" fill="#c4690c"/><rect x="10" y="12" width="2" height="2" fill="#f39a26"/><rect x="12" y="12" width="2" height="2" fill="#fbd98a"/><rect x="14" y="12" width="2" height="2" fill="#f39a26"/><rect x="16" y="12" width="2" height="2" fill="#c4690c"/><rect x="18" y="12" width="2" height="2" fill="#c4690c"/><rect x="20" y="12" width="2" height="2" fill="#c4690c"/><rect x="2" y="14" width="2" height="2" fill="#c4690c"/><rect x="10" y="14" width="2" height="2" fill="#c4690c"/><rect x="12" y="14" width="2" height="2" fill="#f39a26"/><rect x="14" y="14" width="2" height="2" fill="#fbd98a"/><rect x="16" y="14" width="2" height="2" fill="#fbd98a"/><rect x="18" y="14" width="2" height="2" fill="#fbd98a"/><rect x="20" y="14" width="2" height="2" fill="#f39a26"/><rect x="22" y="14" width="2" height="2" fill="#c4690c"/><rect x="12" y="16" width="2" height="2" fill="#7a4406"/><rect x="14" y="16" width="2" height="2" fill="#f39a26"/><rect x="16" y="16" width="2" height="2" fill="#f39a26"/><rect x="18" y="16" width="2" height="2" fill="#f39a26"/><rect x="20" y="16" width="2" height="2" fill="#f39a26"/><rect x="22" y="16" width="2" height="2" fill="#c4690c"/><rect x="14" y="18" width="2" height="2" fill="#7a4406"/><rect x="16" y="18" width="2" height="2" fill="#7a4406"/><rect x="18" y="18" width="2" height="2" fill="#7a4406"/><rect x="20" y="18" width="2" height="2" fill="#7a4406"/></svg>
<span class="t" style="left:171.52px;top:1131.57px;font-size:27px;font-weight:bold;color:#000;transform:scaleX(1.0558);">backend</span>
<span class="t" style="left:295.29px;top:1131.57px;font-size:27px;font-weight:normal;color:#000;transform:scaleX(1.1529);">of</span>
<svg style="left:332px;top:1132px" width="28" height="28" viewBox="0 0 28 28"><rect x="1" y="1" width="26" height="26" rx="1.6" fill="#fff" stroke="#8e8e8e" stroke-width="2"/><rect x="7.8" y="5.8" width="12.4" height="14.4" rx="5.2" ry="6" fill="none" stroke="#ff8000" stroke-width="3.6"/></svg>
<span class="t" style="left:371.49px;top:1131.57px;font-size:27px;font-weight:normal;color:#000;transform:scaleX(1.0655);">org</span>
<span class="t" style="left:413.24px;top:1131.57px;font-size:27px;font-weight:normal;color:#000;transform:scaleX(0.9971);">.apache</span>
<span class="t" style="left:509.04px;top:1131.57px;font-size:27px;font-weight:normal;color:#000;transform:scaleX(0.9995);">.beam</span>
<span class="t" style="left:583.88px;top:1131.57px;font-size:27px;font-weight:normal;color:#000;transform:scaleX(1.0611);">.runners</span>
<span class="t" style="left:688.65px;top:1131.57px;font-size:27px;font-weight:normal;color:#000;transform:scaleX(1.1960);">.flink</span>
<span class="t" style="left:755.32px;top:1131.57px;font-size:27px;font-weight:normal;color:#000;transform:scaleX(1.0880);">.translation</span>
<span class="t" style="left:899.17px;top:1131.57px;font-size:27px;font-weight:normal;color:#000;transform:scaleX(1.0258);">.wrappers</span>
<span class="t" style="left:1020.67px;top:1131.57px;font-size:27px;font-weight:normal;color:#000;transform:scaleX(1.0671);">.streaming</span>
<span class="t" style="left:1155.33px;top:1131.57px;font-size:27px;font-weight:normal;color:#000;transform:scaleX(1.0001);">.KeyedPushedBackElementsHandler</span>
<span class="t" style="left:2026.61px;top:1131.57px;font-size:27px;font-weight:normal;color:#000;transform:scaleX(1.0600);">32</span>
<span class="t" style="left:2262.61px;top:1131.57px;font-size:27px;font-weight:normal;color:#000;transform:scaleX(1.0600);">32</span>
<svg style="left:99px;top:1177px" width="15" height="18" viewBox="0 0 15 18"><path d="M0 0L14.6 9L0 18z" fill="#8c8c8c"/></svg>
<svg style="left:134px;top:1176px" width="24" height="20" viewBox="0 0 24 20" shape-rendering="crispEdges"><rect x="2" y="0" width="2" height="2" fill="#6e5634"/><rect x="4" y="0" width="2" height="2" fill="#6e5634"/><rect x="6" y="0" width="2" height="2" fill="#6e5634"/><rect x="8" y="0" width="2" height="2" fill="#6e5634"/><rect x="10" y="0" width="2" height="2" fill="#6e5634"/><rect x="12" y="0" width="2" height="2" fill="#6e5634"/><rect x="0" y="2" width="2" height="2" fill="#6e5634"/><rect x="2" y="2" width="2" height="2" fill="#ffc04f"/><rect x="4" y="2" width="2" height="2" fill="#ffc04f"/><rect x="6" y="2" width="2" height="2" fill="#ffc04f"/><rect x="8" y="2" width="2" height="2" fill="#ffc04f"/><rect x="10" y="2" width="2" height="2" fill="#ffc04f"/><rect x="12" y="2" width="2" height="2" fill="#f39a26"/><rect x="14" y="2" width="2" height="2" fill="#c4690c"/><rect x="0" y="4" width="2" height="2" fill="#6e5634"/><rect x="2" y="4" width="2" height="2" fill="#ffc04f"/><rect x="4" y="4" width="2" height="2" fill="#fbd98a"/><rect x="6" y="4" width="2" height="2" fill="#c4690c"/><rect x="8" y="4" width="2" height="2" fill="#c4690c"/><rect x="10" y="4" width="2" height="2" fill="#6e5634"/><rect x="12" y="4" width="2" height="2" fill="#6e5634"/><rect x="0" y="6" width="2" height="2" fill="#6e5634"/><rect x="2" y="6" width="2" height="2" fill="#ffc04f"/><rect x="4" y="6" width="2" height="2" fill="#c4690c"/><rect x="6" y="6" width="2" height="2" fill="#fbd98a"/><rect x="8" y="6" width="2" height="2" fill="#f39a26"/><rect x="10" y="6" width="2" height="2" fill="#c4690c"/><rect x="0" y="8" width="2" height="2" fill="#6e5634"/><rect x="2" y="8" width="2" height="2" fill="#ffc04f"/><rect x="4" y="8" width="2" height="2" fill="#c4690c"/><rect x="6" y="8" width="2" height="2" fill="#f39a26"/><rect x="8" y="8" width="2" height="2" fill="#fbd98a"/><rect x="10" y="8" width="2" height="2" fill="#f39a26"/><rect x="12" y="8" width="2" height="2" fill="#c4690c"/><rect x="0" y="10" width="2" height="2" fill="#6e5634"/><rect x="2" y="10" width="2" height="2" fill="#ffc04f"/><rect x="4" y="10" width="2" height="2" fill="#6e5634"/><rect x="6" y="10" width="2" height="2" fill="#c4690c"/><rect x="8" y="10" width="2" height="2" fill="#f39a26"/><rect x="10" y="10" width="2" height="2" fill="#fbd98a"/><rect x="12" y="10" width="2" height="2" fill="#f39a26"/><rect x="14" y="10" width="2" height="2" fill="#c4690c"/><rect x="0" y="12" width="2" height="2" fill="#6e5634"/><rect x="2" y="12" width="2" height="2" fill="#f39a26"/><rect x="4" y="12" width="2" height="2" fill="#6e5634"/><rect x="8" y="12" width="2" height="2" fill="#c4690c"/><rect x="10" y="12" width="2" height="2" fill="#f39a26"/><rect x="12" y="12" width="2" height="2" fill="#fbd98a"/><rect x="14" y="12" width="2" height="2" fill="#f39a26"/><rect x="16" y="12" width="2" height="2" fill="#c4690c"/><rect x="18" y="12" width="2" height="2" fill="#c4690c"/><rect x="20" y="12" width="2" height="2" fill="#c4690c"/><rect x="2" y="14" width="2" height="2" fill="#c4690c"/><rect x="10" y="14" width="2" height="2" fill="#c4690c"/><rect x="12" y="14" width="2" height="2" fill="#f39a26"/><rect x="14" y="14" width="2" height="2" fill="#fbd98a"/><rect x="16" y="14" width="2" height="2" fill="#fbd98a"/><rect x="18" y="14" width="2" height="2" fill="#fbd98a"/><rect x="20" y="14" width="2" height="2" fill="#f39a26"/><rect x="22" y="14" width="2" height="2" fill="#c4690c"/><rect x="12" y="16" width="2" height="2" fill="#7a4406"/><rect x="14" y="16" width="2" height="2" fill="#f39a26"/><rect x="16" y="16" width="2" height="2" fill="#f39a26"/><rect x="18" y="16" width="2" height="2" fill="#f39a26"/><rect x="20" y="16" width="2" height="2" fill="#f39a26"/><rect x="22" y="16" width="2" height="2" fill="#c4690c"/><rect x="14" y="18" width="2" height="2" fill="#7a4406"/><rect x="16" y="18" width="2" height="2" fill="#7a4406"/><rect x="18" y="18" width="2" height="2" fill="#7a4406"/><rect x="20" y="18" width="2" height="2" fill="#7a4406"/></svg>
<span class="t" style="left:171.42px;top:1171.57px;font-size:27px;font-weight:bold;color:#000;transform:scaleX(1.0507);">key</span>
<span class="t" style="left:227.49px;top:1171.57px;font-size:27px;font-weight:normal;color:#000;transform:scaleX(1.1529);">of</span>
<svg style="left:264px;top:1172px" width="28" height="28" viewBox="0 0 28 28"><rect x="1" y="1" width="26" height="26" rx="1.6" fill="#fff" stroke="#8e8e8e" stroke-width="2"/><rect x="7.8" y="5.8" width="12.4" height="14.4" rx="5.2" ry="6" fill="none" stroke="#ff8000" stroke-width="3.6"/></svg>
<span class="t" style="left:302.48px;top:1171.57px;font-size:27px;font-weight:normal;color:#000;transform:scaleX(1.0331);">java</span>
<span class="t" style="left:353.26px;top:1171.57px;font-size:27px;font-weight:normal;color:#000;transform:scaleX(1.1924);">.util</span>
<span class="t" style="left:403.77px;top:1171.57px;font-size:27px;font-weight:normal;color:#000;transform:scaleX(1.0242);">.HashMap$Node </span>
<span class="t" style="left:619.05px;top:1171.57px;font-size:27px;font-weight:normal;color:#000;transform:scaleX(0.9869);">(HeapKeyedStateBackend </span>
<span class="t" style="left:940.50px;top:1171.57px;font-size:27px;font-weight:normal;color:#000;transform:scaleX(2.0452);">  </span>
<span class="t" style="left:972.44px;top:1171.57px;font-size:27px;font-weight:normal;color:#000;transform:scaleX(1.0634);">Object)</span>
<span class="t" style="left:2026.61px;top:1171.57px;font-size:27px;font-weight:normal;color:#000;transform:scaleX(1.0600);">32</span>
<span class="t" style="left:2262.61px;top:1171.57px;font-size:27px;font-weight:normal;color:#000;transform:scaleX(1.0600);">32</span>
<svg style="left:942px;top:1180px" width="23" height="13" viewBox="0 0 23 13"><rect x="0.8" y="5.1" width="16" height="2.5" fill="#000"/><path d="M15.2 0.9L21.6 6.35L15.2 11.9z" fill="#000"/></svg>
<div style="left:24px;top:1206px;width:2296px;height:40px;background:#f2f2f2"></div>
<svg style="left:99px;top:1217px" width="15" height="18" viewBox="0 0 15 18"><path d="M0 0L14.6 9L0 18z" fill="#8c8c8c"/></svg>
<svg style="left:134px;top:1216px" width="24" height="20" viewBox="0 0 24 20" shape-rendering="crispEdges"><rect x="2" y="0" width="2" height="2" fill="#6e5634"/><rect x="4" y="0" width="2" height="2" fill="#6e5634"/><rect x="6" y="0" width="2" height="2" fill="#6e5634"/><rect x="8" y="0" width="2" height="2" fill="#6e5634"/><rect x="10" y="0" width="2" height="2" fill="#6e5634"/><rect x="12" y="0" width="2" height="2" fill="#6e5634"/><rect x="0" y="2" width="2" height="2" fill="#6e5634"/><rect x="2" y="2" width="2" height="2" fill="#ffc04f"/><rect x="4" y="2" width="2" height="2" fill="#ffc04f"/><rect x="6" y="2" width="2" height="2" fill="#ffc04f"/><rect x="8" y="2" width="2" height="2" fill="#ffc04f"/><rect x="10" y="2" width="2" height="2" fill="#ffc04f"/><rect x="12" y="2" width="2" height="2" fill="#f39a26"/><rect x="14" y="2" width="2" height="2" fill="#c4690c"/><rect x="0" y="4" width="2" height="2" fill="#6e5634"/><rect x="2" y="4" width="2" height="2" fill="#ffc04f"/><rect x="4" y="4" width="2" height="2" fill="#fbd98a"/><rect x="6" y="4" width="2" height="2" fill="#c4690c"/><rect x="8" y="4" width="2" height="2" fill="#c4690c"/><rect x="10" y="4" width="2" height="2" fill="#6e5634"/><rect x="12" y="4" width="2" height="2" fill="#6e5634"/><rect x="0" y="6" width="2" height="2" fill="#6e5634"/><rect x="2" y="6" width="2" height="2" fill="#ffc04f"/><rect x="4" y="6" width="2" height="2" fill="#c4690c"/><rect x="6" y="6" width="2" height="2" fill="#fbd98a"/><rect x="8" y="6" width="2" height="2" fill="#f39a26"/><rect x="10" y="6" width="2" height="2" fill="#c4690c"/><rect x="0" y="8" width="2" height="2" fill="#6e5634"/><rect x="2" y="8" width="2" height="2" fill="#ffc04f"/><rect x="4" y="8" width="2" height="2" fill="#c4690c"/><rect x="6" y="8" width="2" height="2" fill="#f39a26"/><rect x="8" y="8" width="2" height="2" fill="#fbd98a"/><rect x="10" y="8" width="2" height="2" fill="#f39a26"/><rect x="12" y="8" width="2" height="2" fill="#c4690c"/><rect x="0" y="10" width="2" height="2" fill="#6e5634"/><rect x="2" y="10" width="2" height="2" fill="#ffc04f"/><rect x="4" y="10" width="2" height="2" fill="#6e5634"/><rect x="6" y="10" width="2" height="2" fill="#c4690c"/><rect x="8" y="10" width="2" height="2" fill="#f39a26"/><rect x="10" y="10" width="2" height="2" fill="#fbd98a"/><rect x="12" y="10" width="2" height="2" fill="#f39a26"/><rect x="14" y="10" width="2" height="2" fill="#c4690c"/><rect x="0" y="12" width="2" height="2" fill="#6e5634"/><rect x="2" y="12" width="2" height="2" fill="#f39a26"/><rect x="4" y="12" width="2" height="2" fill="#6e5634"/><rect x="8" y="12" width="2" height="2" fill="#c4690c"/><rect x="10" y="12" width="2" height="2" fill="#f39a26"/><rect x="12" y="12" width="2" height="2" fill="#fbd98a"/><rect x="14" y="12" width="2" height="2" fill="#f39a26"/><rect x="16" y="12" width="2" height="2" fill="#c4690c"/><rect x="18" y="12" width="2" height="2" fill="#c4690c"/><rect x="20" y="12" width="2" height="2" fill="#c4690c"/><rect x="2" y="14" width="2" height="2" fill="#c4690c"/><rect x="10" y="14" width="2" height="2" fill="#c4690c"/><rect x="12" y="14" width="2" height="2" fill="#f39a26"/><rect x="14" y="14" width="2" height="2" fill="#fbd98a"/><rect x="16" y="14" width="2" height="2" fill="#fbd98a"/><rect x="18" y="14" width="2" height="2" fill="#fbd98a"/><rect x="20" y="14" width="2" height="2" fill="#f39a26"/><rect x="22" y="14" width="2" height="2" fill="#c4690c"/><rect x="12" y="16" width="2" height="2" fill="#7a4406"/><rect x="14" y="16" width="2" height="2" fill="#f39a26"/><rect x="16" y="16" width="2" height="2" fill="#f39a26"/><rect x="18" y="16" width="2" height="2" fill="#f39a26"/><rect x="20" y="16" width="2" height="2" fill="#f39a26"/><rect x="22" y="16" width="2" height="2" fill="#c4690c"/><rect x="14" y="18" width="2" height="2" fill="#7a4406"/><rect x="16" y="18" width="2" height="2" fill="#7a4406"/><rect x="18" y="18" width="2" height="2" fill="#7a4406"/><rect x="20" y="18" width="2" height="2" fill="#7a4406"/></svg>
<span class="t" style="left:171.36px;top:1211.57px;font-size:27px;font-weight:bold;color:#000;transform:scaleX(1.0815);">keyed</span>
<span class="t" style="left:254.22px;top:1211.57px;font-size:27px;font-weight:bold;color:#000;transform:scaleX(1.0007);">State</span>
<span class="t" style="left:320.28px;top:1211.57px;font-size:27px;font-weight:bold;color:#000;transform:scaleX(1.0049);">Backend</span>
<span class="t" style="left:441.73px;top:1211.57px;font-size:27px;font-weight:normal;color:#000;transform:scaleX(1.1203);">of</span>
<svg style="left:478px;top:1212px" width="28" height="28" viewBox="0 0 28 28"><rect x="1" y="1" width="26" height="26" rx="1.6" fill="#fff" stroke="#8e8e8e" stroke-width="2"/><rect x="7.8" y="5.8" width="12.4" height="14.4" rx="5.2" ry="6" fill="none" stroke="#ff8000" stroke-width="3.6"/></svg>
<span class="t" style="left:517.79px;top:1211.57px;font-size:27px;font-weight:normal;color:#000;transform:scaleX(1.0680);">org</span>
<span class="t" style="left:559.64px;top:1211.57px;font-size:27px;font-weight:normal;color:#000;transform:scaleX(0.9981);">.apache</span>
<span class="t" style="left:655.07px;top:1211.57px;font-size:27px;font-weight:normal;color:#000;transform:scaleX(1.1870);">.flink</span>
<span class="t" style="left:721.21px;top:1211.57px;font-size:27px;font-weight:normal;color:#000;transform:scaleX(1.0899);">.runtime</span>
<span class="t" style="left:827.59px;top:1211.57px;font-size:27px;font-weight:normal;color:#000;transform:scaleX(1.0600);">.state</span>
<span class="t" style="left:897.71px;top:1211.57px;font-size:27px;font-weight:normal;color:#000;transform:scaleX(1.0102);">.DefaultKeyedStateStore</span>
<span class="t" style="left:2026.00px;top:1211.57px;font-size:27px;font-weight:normal;color:#000;transform:scaleX(1.0600);">24</span>
<span class="t" style="left:2262.00px;top:1211.57px;font-size:27px;font-weight:normal;color:#000;transform:scaleX(1.0600);">24</span>
<div style="left:2324px;top:448px;width:4px;height:846px;background:#e4e4e4"></div>
</body></html>
